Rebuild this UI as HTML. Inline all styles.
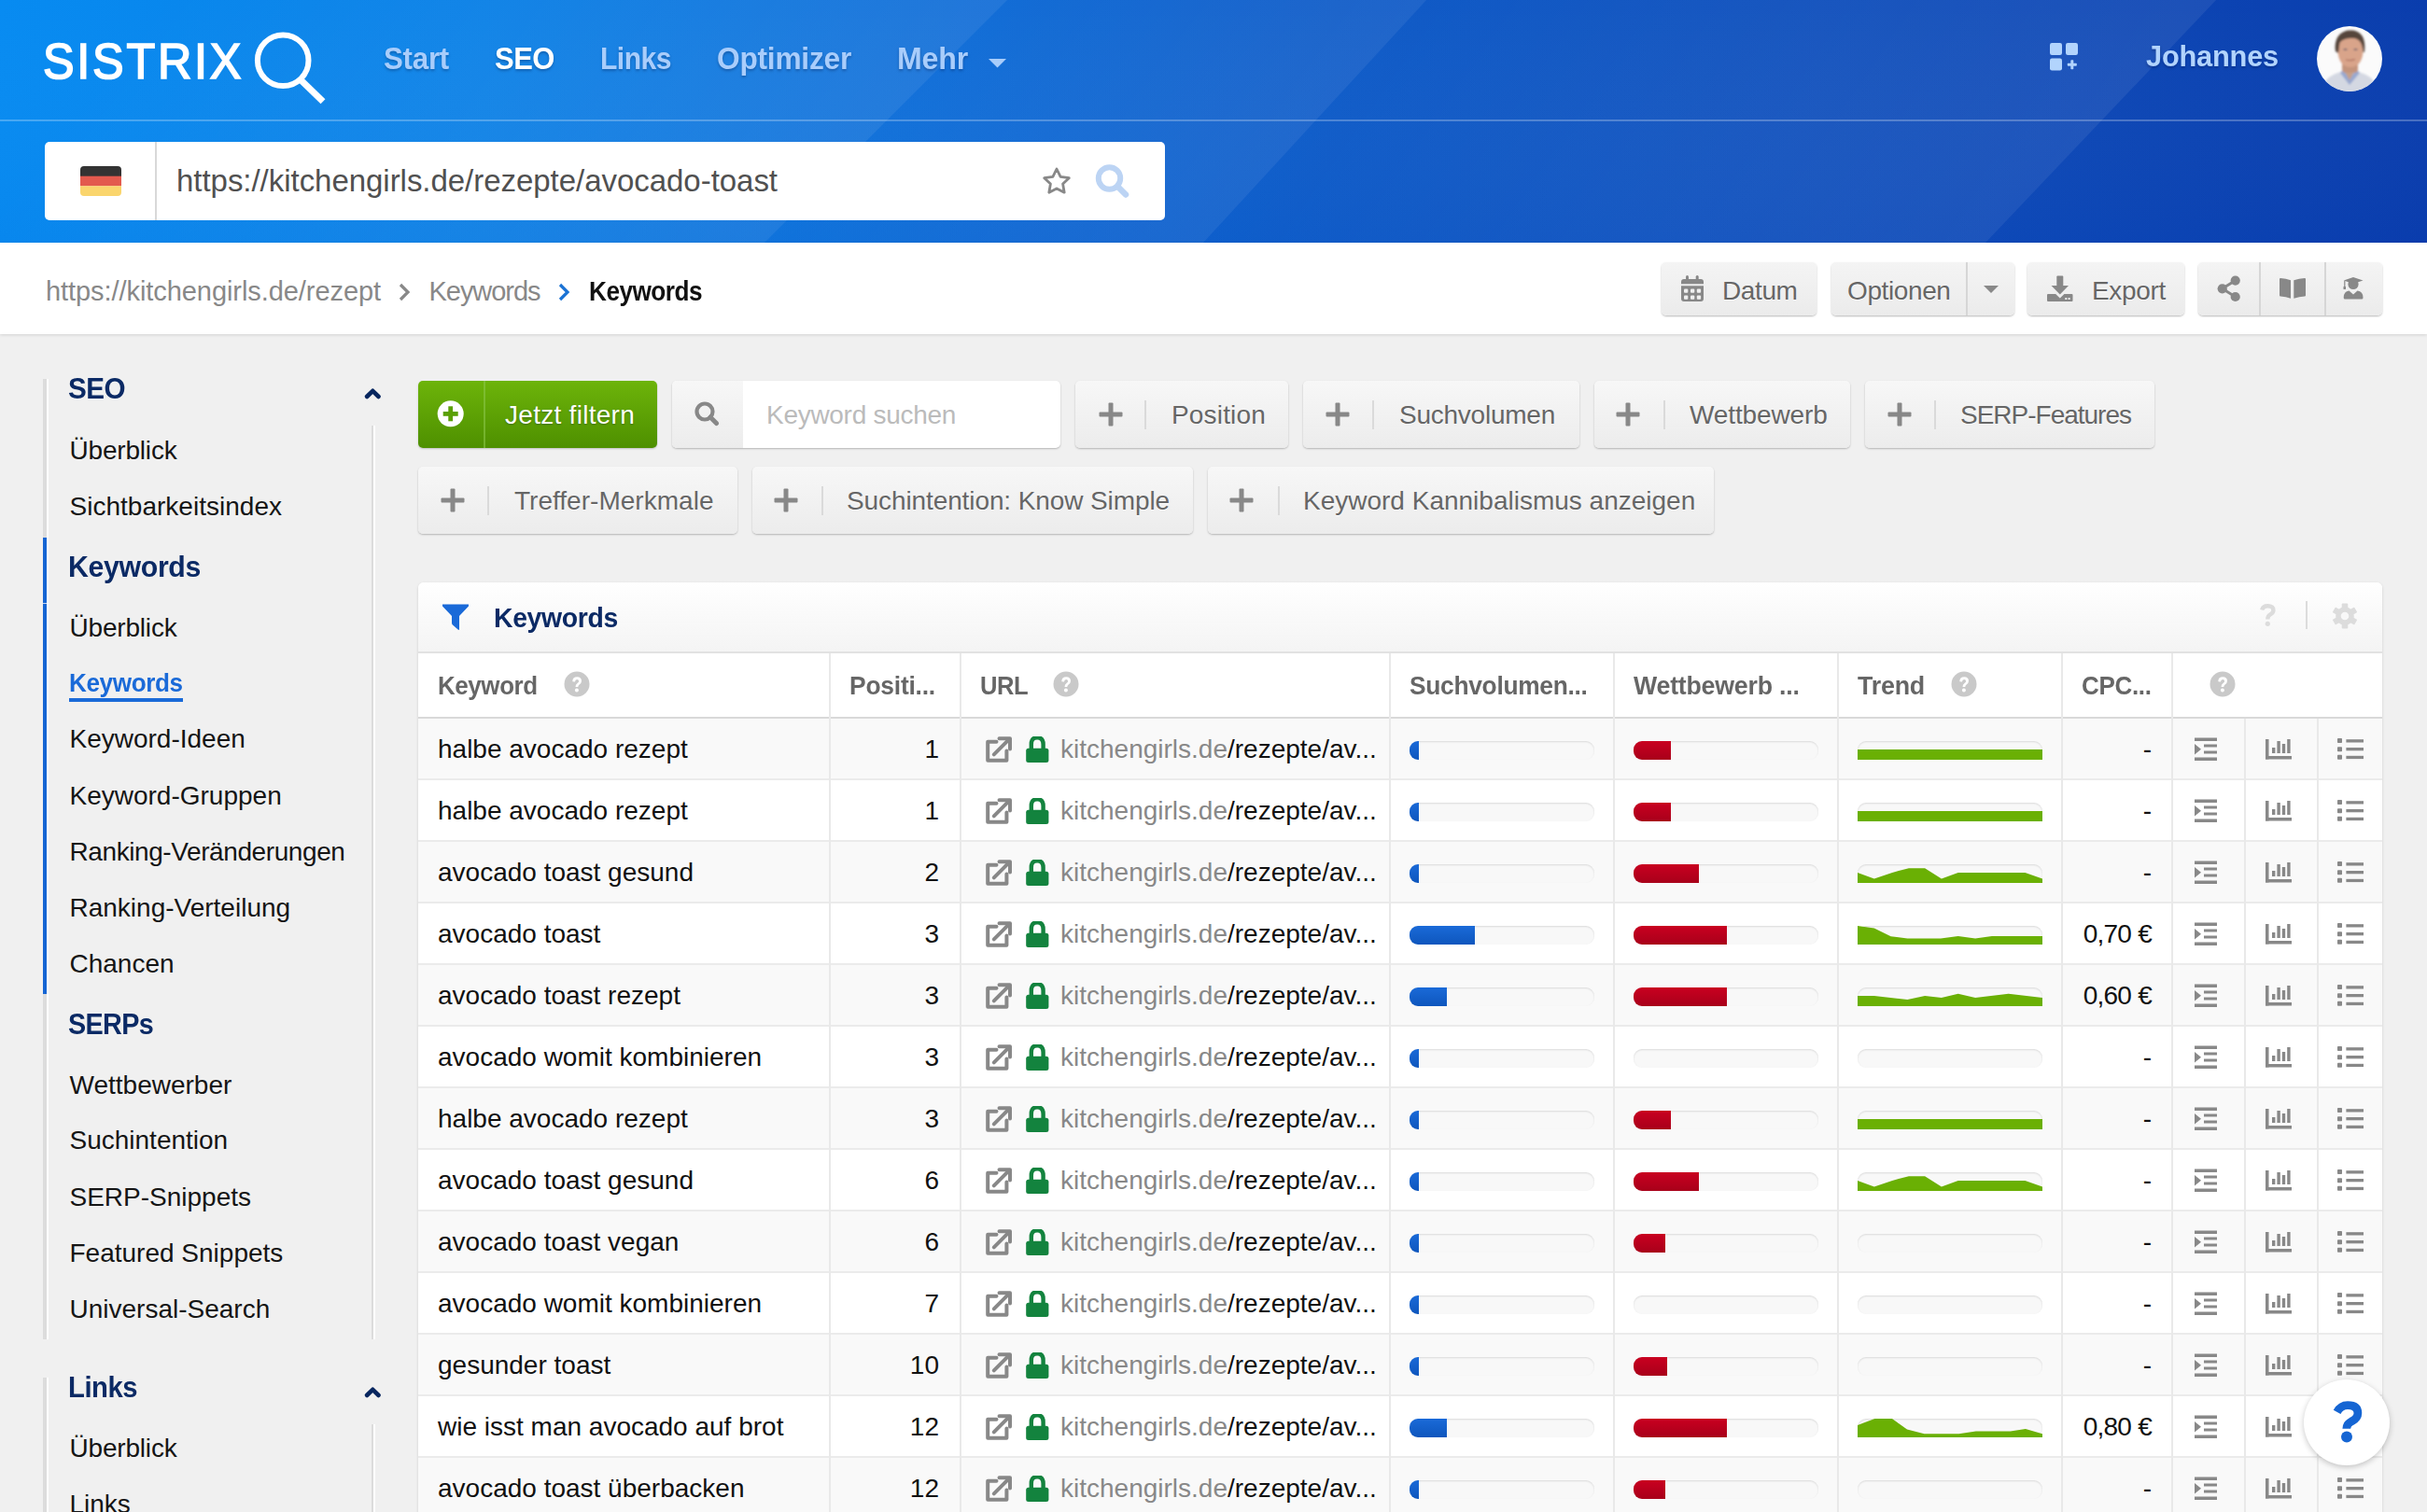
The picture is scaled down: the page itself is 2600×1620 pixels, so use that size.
<!DOCTYPE html><html><head><meta charset="utf-8"><style>
html,body{margin:0;padding:0}
body{width:2600px;height:1620px;overflow:hidden;position:relative;background:#f0f0f0;font-family:"Liberation Sans",sans-serif}
.t{position:absolute;line-height:1.117;white-space:nowrap}
</style></head><body><div style="position:absolute;left:0;top:0;width:2600px;height:260px;overflow:hidden;
background:linear-gradient(90deg,#078bf1 0%,#0a80e6 20%,#0c6ad6 40%,#0e5bc8 55%,#0f4fbc 75%,#0a3dad 100%)">
<svg width="2600" height="260" style="position:absolute;left:0;top:0">
<defs>
<linearGradient id="g1" gradientUnits="userSpaceOnUse" x1="400" y1="-300" x2="949" y2="130"><stop offset="0" stop-color="#fff" stop-opacity="0"/><stop offset="1" stop-color="#fff" stop-opacity="0.09"/></linearGradient>
<linearGradient id="g2" gradientUnits="userSpaceOnUse" x1="1000" y1="-200" x2="1408" y2="130"><stop offset="0" stop-color="#fff" stop-opacity="0"/><stop offset="1" stop-color="#fff" stop-opacity="0.07"/></linearGradient>
<linearGradient id="g3" gradientUnits="userSpaceOnUse" x1="1650" y1="-300" x2="2250" y2="130"><stop offset="0" stop-color="#fff" stop-opacity="0"/><stop offset="1" stop-color="#fff" stop-opacity="0.07"/></linearGradient>
<linearGradient id="gv" x1="0" y1="0" x2="0" y2="1"><stop offset="0" stop-color="#fff" stop-opacity="0"/><stop offset="1" stop-color="#0030b0" stop-opacity="0.05"/></linearGradient>
</defs>
<polygon points="0,0 1079,0 819,260 0,260" fill="url(#g1)"/>
<polygon points="1079,0 1528,0 1289,260 819,260" fill="url(#g2)"/>
<polygon points="1528,0 2374,0 2127,260 1289,260" fill="url(#g3)"/>
<rect x="0" y="0" width="2600" height="260" fill="url(#gv)"/>
<rect x="0" y="128" width="2600" height="2" fill="#fff" fill-opacity="0.25"/>
</svg>
</div><svg style="position:absolute;left:260px;top:25px" width="100" height="95" viewBox="260 25 100 95">
<circle cx="303.2" cy="64.7" r="27.3" fill="none" stroke="#fff" stroke-width="6"/>
<line x1="321" y1="84.5" x2="346" y2="108.8" stroke="#fff" stroke-width="7"/>
</svg><svg style="position:absolute;left:1057px;top:61px" width="24" height="14"><polygon points="2,2 21,2 11.5,11.5" fill="#a9cdfb"/></svg><svg style="position:absolute;left:2194px;top:44px" width="34" height="34" viewBox="0 0 34 34">
<rect x="2" y="2" width="13" height="13" rx="2.2" fill="#b2d4fd"/>
<rect x="19" y="2" width="13" height="13" rx="2.2" fill="#b2d4fd"/>
<rect x="2" y="18.5" width="13" height="13" rx="2.2" fill="#b2d4fd"/>
<rect x="24.3" y="20.2" width="3" height="10" rx="0.8" fill="#b2d4fd"/>
<rect x="20.8" y="23.7" width="10" height="3" rx="0.8" fill="#b2d4fd"/>
</svg><svg style="position:absolute;left:2482px;top:28px" width="70" height="70" viewBox="0 0 70 70">
<defs><clipPath id="av"><circle cx="35" cy="35" r="35"/></clipPath><filter id="avb"><feGaussianBlur stdDeviation="0.9"/></filter></defs>
<g clip-path="url(#av)">
<rect width="70" height="70" fill="#fbfbfb"/>
<g filter="url(#avb)">
<path d="M4 72 C6 58 14 52 26 49 L44 49 C56 52 64 58 66 72 Z" fill="#d4d8e2"/>
<path d="M25 50 L35 63 L46 50 L43 47 L35 55 L28 47 Z" fill="#98a8d0"/>
<path d="M30 49 L35 58 L40 49 Z" fill="#c8a088"/>
<rect x="27" y="38" width="17" height="12" rx="4" fill="#c4947c"/>
<path d="M22.5 26 C22.5 15 28 11.5 36 11.5 C44 11.5 49.5 15 49.5 26 C49.5 37 44 44 36 44 C28 44 22.5 37 22.5 26 Z" fill="#d9a48a"/>
<path d="M20 27 C18 12 26 4.5 36 4.5 C47 4.5 53 12 51 28 L49.5 28 C49 19 46 14 40 13 C34 12.5 27 13.5 24.5 18 L23 29 Z" fill="#54443a"/>
<ellipse cx="30.5" cy="25" rx="2.2" ry="1.1" fill="#7a6a70"/><ellipse cx="41.5" cy="25" rx="2.2" ry="1.1" fill="#7a6a70"/>
<path d="M31 36 Q36 37.5 41 35.5" stroke="#a86a5a" stroke-width="1.3" fill="none"/>
</g></g></svg><div style="position:absolute;left:48px;top:152px;width:1200px;height:84px;background:#fff;border-radius:5px"></div>
<div style="position:absolute;left:166px;top:152px;width:2px;height:84px;background:#d8d8d8"></div>
<svg style="position:absolute;left:86px;top:178px" width="44" height="32" viewBox="0 0 44 32">
<defs><clipPath id="fl"><rect width="44" height="32" rx="4"/></clipPath></defs>
<g clip-path="url(#fl)"><rect width="44" height="11" fill="#333"/><rect y="10.7" width="44" height="10.7" fill="#e35a4e"/><rect y="21.3" width="44" height="10.7" fill="#fad56d"/></g></svg>
<svg style="position:absolute;left:1112px;top:175px" width="40" height="36" viewBox="0 0 40 36">
<polygon points="20,6 24.1,14.3 33.3,15.7 26.6,22.1 28.2,31.2 20,26.9 11.8,31.2 13.4,22.1 6.7,15.7 15.9,14.3" fill="none" stroke="#888" stroke-width="2.8" stroke-linejoin="round"/></svg>
<svg style="position:absolute;left:1170px;top:172px" width="45" height="45" viewBox="1170 172 45 45">
<circle cx="1188.5" cy="191" r="11.7" fill="none" stroke="#bcd4f4" stroke-width="6"/>
<line x1="1198" y1="200.5" x2="1206" y2="208.5" stroke="#bcd4f4" stroke-width="6.5" stroke-linecap="round"/></svg><div style="position:absolute;left:0;top:260px;width:2600px;height:98px;background:#fff;box-shadow:0 1px 3px rgba(0,0,0,0.12)"></div><svg style="position:absolute;left:424px;top:301px" width="20" height="24"><polyline points="5,4 13,12 5,20" fill="none" stroke="#888" stroke-width="3.2"/></svg><svg style="position:absolute;left:595px;top:301px" width="20" height="24"><polyline points="5,4 13,12 5,20" fill="none" stroke="#1a72d4" stroke-width="3.2"/></svg><div style="position:absolute;top:281px;height:57px;border-radius:5px;background:linear-gradient(#f4f4f4,#ebebeb);box-shadow:0 1px 2px rgba(0,0,0,0.28);left:1780px;width:166px"></div><div style="position:absolute;top:281px;height:57px;border-radius:5px;background:linear-gradient(#f4f4f4,#ebebeb);box-shadow:0 1px 2px rgba(0,0,0,0.28);left:1962px;width:196px"></div><div style="position:absolute;left:2106px;top:281px;width:2px;height:57px;background:#d6d6d6"></div><div style="position:absolute;top:281px;height:57px;border-radius:5px;background:linear-gradient(#f4f4f4,#ebebeb);box-shadow:0 1px 2px rgba(0,0,0,0.28);left:2172px;width:168px"></div><div style="position:absolute;top:281px;height:57px;border-radius:5px;background:linear-gradient(#f4f4f4,#ebebeb);box-shadow:0 1px 2px rgba(0,0,0,0.28);left:2355px;width:197px"></div><div style="position:absolute;left:2420px;top:281px;width:2px;height:57px;background:#d6d6d6"></div><div style="position:absolute;left:2490px;top:281px;width:2px;height:57px;background:#d6d6d6"></div><svg style="position:absolute;left:1800px;top:294px" width="26" height="30" viewBox="0 0 26 30">
<rect x="6" y="1" width="3" height="6" rx="1.5" fill="#888"/><rect x="16.7" y="1" width="3" height="6" rx="1.5" fill="#888"/>
<path d="M1 8 Q1 5 4 5 L22 5 Q25 5 25 8 L25 10.2 L1 10.2 Z" fill="#888"/>
<path d="M1 12.2 L25 12.2 L25 26 Q25 29 22 29 L4 29 Q1 29 1 26 Z" fill="#888"/>
<g fill="#f0f0f0"><rect x="4" y="15.5" width="4.3" height="4.3" rx="1"/><rect x="11" y="15.5" width="4.3" height="4.3" rx="1"/><rect x="17.8" y="15.5" width="4.3" height="4.3" rx="1"/>
<rect x="4" y="22.5" width="4.3" height="4.3" rx="1"/><rect x="11" y="22.5" width="4.3" height="4.3" rx="1"/><rect x="17.8" y="22.5" width="4.3" height="4.3" rx="1"/></g></svg><svg style="position:absolute;left:2117px;top:302px" width="32" height="16"><polygon points="8,4 24,4 16,12" fill="#888"/></svg><svg style="position:absolute;left:2192px;top:294px" width="30" height="30" viewBox="0 0 30 30">
<rect x="11.3" y="1.5" width="7" height="11" rx="1" fill="#888"/>
<polygon points="5.5,12 24,12 14.8,21.5" fill="#888"/>
<path d="M1 22 Q1 21 2 21 L10.2 21 L14.8 25.5 L19.4 21 L27.5 21 Q28.5 21 28.5 22 L28.5 28 Q28.5 29 27.5 29 L2 29 Q1 29 1 28 Z" fill="#888"/>
<rect x="20.3" y="25" width="2" height="2" fill="#eee"/><rect x="23.6" y="25" width="2" height="2" fill="#eee"/></svg><svg style="position:absolute;left:2372px;top:292px" width="32" height="34" viewBox="0 0 32 34">
<line x1="22.7" y1="8.6" x2="8.7" y2="17.3" stroke="#888" stroke-width="3"/><line x1="8.7" y1="17.3" x2="22.7" y2="26" stroke="#888" stroke-width="3"/>
<circle cx="22.7" cy="8.6" r="5.1" fill="#888"/><circle cx="8.7" cy="17.3" r="5.1" fill="#888"/><circle cx="22.7" cy="26" r="5.1" fill="#888"/></svg>
<svg style="position:absolute;left:2440px;top:296px" width="32" height="26" viewBox="0 0 32 26">
<path d="M2 3 Q2 2 3 2 Q9 2.5 14 4.2 L14 23.8 Q9 22 3 21.5 Q2 21.5 2 20.5 Z" fill="#888"/>
<path d="M30 3 Q30 2 29 2 Q23 2.5 17.3 4.2 L17.3 23.8 Q23 22 29 21.5 Q30 21.5 30 20.5 Z" fill="#888"/></svg>
<svg style="position:absolute;left:2508px;top:295px" width="28" height="28" viewBox="0 0 28 28">
<polygon points="2.7,5.5 13,2 23.5,5.5 13,9" fill="#888"/>
<circle cx="13" cy="9.5" r="5.6" fill="#888"/>
<rect x="3.2" y="6" width="1.2" height="8" fill="#888"/><rect x="2.5" y="12" width="2.5" height="3" fill="#888"/>
<path d="M2.7 24 Q2.7 17 8.5 16.5 L13 20.5 L17.5 16.5 Q23.5 17 23.5 24 Q23.5 25.5 22 25.5 L4.2 25.5 Q2.7 25.5 2.7 24 Z" fill="#888"/></svg><div style="position:absolute;left:50px;top:406px;width:2px;height:1029px;background:#fff"></div><div style="position:absolute;left:50px;top:1476px;width:2px;height:150px;background:#fff"></div><div style="position:absolute;left:400px;top:456px;width:2px;height:979px;background:#fff"></div><div style="position:absolute;left:400px;top:1526px;width:2px;height:100px;background:#fff"></div><div style="position:absolute;left:46px;top:406px;width:4px;height:1029px;background:#dcdcdc"></div><div style="position:absolute;left:46px;top:576px;width:4px;height:489px;background:#1565d3"></div><div style="position:absolute;left:46px;top:645.5px;width:4px;height:1px;background:#c8d8f0"></div><div style="position:absolute;left:398px;top:456px;width:2px;height:979px;background:#dcdcdc"></div><div style="position:absolute;left:46px;top:1476px;width:4px;height:150px;background:#dcdcdc"></div><div style="position:absolute;left:398px;top:1526px;width:2px;height:100px;background:#dcdcdc"></div><svg style="position:absolute;left:388px;top:413px" width="22" height="16"><polyline points="5,12 11.3,5.8 17.6,12" fill="none" stroke="#07265f" stroke-width="4.6" stroke-linecap="round" stroke-linejoin="round"/></svg><svg style="position:absolute;left:388px;top:1483px" width="22" height="16"><polyline points="5,12 11.3,5.8 17.6,12" fill="none" stroke="#07265f" stroke-width="4.6" stroke-linecap="round" stroke-linejoin="round"/></svg><div style="position:absolute;left:74px;top:748px;width:122px;height:3.5px;background:#1a6ad8"></div><div style="position:absolute;left:448px;top:408px;width:256px;height:72px;border-radius:5px;background:linear-gradient(#6db40a,#4e9000);box-shadow:0 1px 2px rgba(0,0,0,0.2)"></div><div style="position:absolute;left:518px;top:408px;width:2px;height:72px;background:#8bc64a;opacity:0.6"></div><svg style="position:absolute;left:467px;top:428px" width="32" height="32" viewBox="0 0 32 32">
<circle cx="15.7" cy="15.3" r="14" fill="#fff"/><rect x="7.7" y="13" width="16" height="4.8" fill="#5aa005"/><rect x="13.3" y="7.3" width="4.8" height="16" fill="#5aa005"/></svg><div style="position:absolute;height:72px;border-radius:5px;background:linear-gradient(#f7f7f7,#ececec);box-shadow:0 1px 2px rgba(0,0,0,0.25);left:720px;top:408px;width:416px;background:#fff"></div><div style="position:absolute;left:720px;top:408px;width:76px;height:72px;border-radius:5px 0 0 5px;background:linear-gradient(#f7f7f7,#ececec)"></div><svg style="position:absolute;left:740px;top:426px" width="36" height="36" viewBox="0 0 36 36">
<circle cx="15" cy="15" r="8.5" fill="none" stroke="#888" stroke-width="4.2"/><line x1="21" y1="21" x2="27.5" y2="27.5" stroke="#888" stroke-width="5" stroke-linecap="round"/></svg><div style="position:absolute;height:72px;border-radius:5px;background:linear-gradient(#f7f7f7,#ececec);box-shadow:0 1px 2px rgba(0,0,0,0.25);left:1152px;top:408px;width:228px"></div><svg style="position:absolute;left:1176.5px;top:431px" width="26" height="26"><rect x="0.5" y="10.5" width="25" height="5" rx="1" fill="#888"/><rect x="10.5" y="0.5" width="5" height="25" rx="1" fill="#888"/></svg><div style="position:absolute;left:1226px;top:429px;width:2px;height:31px;background:#dadada"></div><div style="position:absolute;height:72px;border-radius:5px;background:linear-gradient(#f7f7f7,#ececec);box-shadow:0 1px 2px rgba(0,0,0,0.25);left:1396px;top:408px;width:296px"></div><svg style="position:absolute;left:1420px;top:431px" width="26" height="26"><rect x="0.5" y="10.5" width="25" height="5" rx="1" fill="#888"/><rect x="10.5" y="0.5" width="5" height="25" rx="1" fill="#888"/></svg><div style="position:absolute;left:1470px;top:429px;width:2px;height:31px;background:#dadada"></div><div style="position:absolute;height:72px;border-radius:5px;background:linear-gradient(#f7f7f7,#ececec);box-shadow:0 1px 2px rgba(0,0,0,0.25);left:1708px;top:408px;width:274px"></div><svg style="position:absolute;left:1731px;top:431px" width="26" height="26"><rect x="0.5" y="10.5" width="25" height="5" rx="1" fill="#888"/><rect x="10.5" y="0.5" width="5" height="25" rx="1" fill="#888"/></svg><div style="position:absolute;left:1782px;top:429px;width:2px;height:31px;background:#dadada"></div><div style="position:absolute;height:72px;border-radius:5px;background:linear-gradient(#f7f7f7,#ececec);box-shadow:0 1px 2px rgba(0,0,0,0.25);left:1998px;top:408px;width:310px"></div><svg style="position:absolute;left:2022px;top:431px" width="26" height="26"><rect x="0.5" y="10.5" width="25" height="5" rx="1" fill="#888"/><rect x="10.5" y="0.5" width="5" height="25" rx="1" fill="#888"/></svg><div style="position:absolute;left:2072px;top:429px;width:2px;height:31px;background:#dadada"></div><div style="position:absolute;height:72px;border-radius:5px;background:linear-gradient(#f7f7f7,#ececec);box-shadow:0 1px 2px rgba(0,0,0,0.25);left:448px;top:500px;width:342px"></div><svg style="position:absolute;left:471.7px;top:523px" width="26" height="26"><rect x="0.5" y="10.5" width="25" height="5" rx="1" fill="#888"/><rect x="10.5" y="0.5" width="5" height="25" rx="1" fill="#888"/></svg><div style="position:absolute;left:522px;top:521px;width:2px;height:31px;background:#dadada"></div><div style="position:absolute;height:72px;border-radius:5px;background:linear-gradient(#f7f7f7,#ececec);box-shadow:0 1px 2px rgba(0,0,0,0.25);left:806px;top:500px;width:472px"></div><svg style="position:absolute;left:829.4px;top:523px" width="26" height="26"><rect x="0.5" y="10.5" width="25" height="5" rx="1" fill="#888"/><rect x="10.5" y="0.5" width="5" height="25" rx="1" fill="#888"/></svg><div style="position:absolute;left:880px;top:521px;width:2px;height:31px;background:#dadada"></div><div style="position:absolute;height:72px;border-radius:5px;background:linear-gradient(#f7f7f7,#ececec);box-shadow:0 1px 2px rgba(0,0,0,0.25);left:1294px;top:500px;width:542px"></div><svg style="position:absolute;left:1317px;top:523px" width="26" height="26"><rect x="0.5" y="10.5" width="25" height="5" rx="1" fill="#888"/><rect x="10.5" y="0.5" width="5" height="25" rx="1" fill="#888"/></svg><div style="position:absolute;left:1368.5px;top:521px;width:2px;height:31px;background:#dadada"></div><div style="position:absolute;left:448px;top:624px;width:2104px;height:1010px;background:#fff;border-radius:6px 6px 0 0;box-shadow:0 1px 3px rgba(0,0,0,0.15)"></div><div style="position:absolute;left:448px;top:624px;width:2104px;height:74px;border-radius:6px 6px 0 0;background:linear-gradient(#ffffff,#f4f4f4)"></div><div style="position:absolute;left:448px;top:698px;width:2104px;height:2px;background:#e2e2e2"></div><svg style="position:absolute;left:472px;top:645px" width="32" height="32" viewBox="0 0 32 32">
<path d="M2 2.5 L30 2.5 L30 4.5 L20 15 L20 29 Q20 30.5 18.6 29.6 L13.5 25 Q12 24 12 22.5 L12 15 L2 4.5 Z" fill="#1a6ad8"/></svg><svg style="position:absolute;left:2416px;top:642px" width="28" height="34" viewBox="0 0 28 34">
<path d="M7.2 11.5 Q8.3 7.3 13.3 7.3 Q19.4 7.3 19.4 11.9 Q19.4 14.6 16.1 16.4 Q13.3 17.9 13.3 21.4" fill="none" stroke="#dcdcdc" stroke-width="4.4"/>
<circle cx="13.3" cy="26.3" r="2.6" fill="#dcdcdc"/></svg>
<div style="position:absolute;left:2470px;top:644px;width:2px;height:30px;background:#dcdcdc"></div>
<svg style="position:absolute;left:2497px;top:644.5px" width="30" height="30" viewBox="-15 -15 30 30">
<g fill="#dcdcdc">
<circle r="9.8"/>
<rect x="-3.3" y="-13.5" width="6.6" height="6" rx="1"/>
<rect x="-3.3" y="-13.5" width="6.6" height="6" rx="1" transform="rotate(60)"/>
<rect x="-3.3" y="-13.5" width="6.6" height="6" rx="1" transform="rotate(120)"/>
<rect x="-3.3" y="-13.5" width="6.6" height="6" rx="1" transform="rotate(180)"/>
<rect x="-3.3" y="-13.5" width="6.6" height="6" rx="1" transform="rotate(240)"/>
<rect x="-3.3" y="-13.5" width="6.6" height="6" rx="1" transform="rotate(300)"/>
</g><circle r="4.3" fill="#f8f8f8"/></svg><div style="position:absolute;left:448px;top:768px;width:2104px;height:2px;background:#d9d9d9"></div><div style="position:absolute;left:448px;top:770px;width:2104px;height:10px;background:linear-gradient(rgba(0,0,0,0.05),rgba(0,0,0,0))"></div><svg style="position:absolute;left:603.5px;top:719.4px" width="28" height="28" viewBox="0 0 28 28">
<circle cx="14" cy="14" r="13.5" fill="#c9c9c9"/>
<path d="M9.3 11.2 Q9.3 6.3 14.2 6.3 Q19 6.3 19 10.8 Q19 13.2 16.4 14.8 Q15.3 15.5 15.3 17 L12.5 17 Q12.5 14.3 14.5 13 Q16.1 12 16.1 10.9 Q16.1 9.1 14.1 9.1 Q12.1 9.1 12 11.6 Z" fill="#fff"/>
<circle cx="13.9" cy="20.6" r="2" fill="#fff"/></svg><svg style="position:absolute;left:1128px;top:719.4px" width="28" height="28" viewBox="0 0 28 28">
<circle cx="14" cy="14" r="13.5" fill="#c9c9c9"/>
<path d="M9.3 11.2 Q9.3 6.3 14.2 6.3 Q19 6.3 19 10.8 Q19 13.2 16.4 14.8 Q15.3 15.5 15.3 17 L12.5 17 Q12.5 14.3 14.5 13 Q16.1 12 16.1 10.9 Q16.1 9.1 14.1 9.1 Q12.1 9.1 12 11.6 Z" fill="#fff"/>
<circle cx="13.9" cy="20.6" r="2" fill="#fff"/></svg><svg style="position:absolute;left:2090px;top:719.4px" width="28" height="28" viewBox="0 0 28 28">
<circle cx="14" cy="14" r="13.5" fill="#c9c9c9"/>
<path d="M9.3 11.2 Q9.3 6.3 14.2 6.3 Q19 6.3 19 10.8 Q19 13.2 16.4 14.8 Q15.3 15.5 15.3 17 L12.5 17 Q12.5 14.3 14.5 13 Q16.1 12 16.1 10.9 Q16.1 9.1 14.1 9.1 Q12.1 9.1 12 11.6 Z" fill="#fff"/>
<circle cx="13.9" cy="20.6" r="2" fill="#fff"/></svg><svg style="position:absolute;left:2367px;top:719.4px" width="28" height="28" viewBox="0 0 28 28">
<circle cx="14" cy="14" r="13.5" fill="#c9c9c9"/>
<path d="M9.3 11.2 Q9.3 6.3 14.2 6.3 Q19 6.3 19 10.8 Q19 13.2 16.4 14.8 Q15.3 15.5 15.3 17 L12.5 17 Q12.5 14.3 14.5 13 Q16.1 12 16.1 10.9 Q16.1 9.1 14.1 9.1 Q12.1 9.1 12 11.6 Z" fill="#fff"/>
<circle cx="13.9" cy="20.6" r="2" fill="#fff"/></svg><div style="position:absolute;left:448px;top:770px;width:2104px;height:66px;background:#f9f9f9"></div><div style="position:absolute;left:448px;top:834px;width:2104px;height:2px;background:#ebebeb"></div><svg style="position:absolute;left:1056px;top:789px" width="28" height="28" viewBox="0 0 28 28">
<polyline points="11.5,5.8 2.2,5.8 2.2,25.8 22.4,25.8 22.4,15.5" fill="none" stroke="#888" stroke-width="4" stroke-linejoin="round" stroke-linecap="round"/>
<line x1="8.8" y1="19.3" x2="24.5" y2="3.6" stroke="#888" stroke-width="4" stroke-linecap="round"/>
<polyline points="14.5,2.3 26,2.3 26,13.5" fill="none" stroke="#888" stroke-width="4" stroke-linejoin="round" stroke-linecap="round"/></svg><svg style="position:absolute;left:1099px;top:789px" width="25" height="29" viewBox="0 0 25 29">
<path d="M5.8 13 L5.8 8.5 Q5.8 1.3 12.2 1.3 Q18.6 1.3 18.6 8.5 L18.6 13" fill="none" stroke="#13833e" stroke-width="4.4"/>
<rect x="0.2" y="12.8" width="24.2" height="15.3" rx="2.5" fill="#13833e"/></svg><div style="position:absolute;width:198px;height:20px;border-radius:9px;background:#f8f8f8;box-shadow:inset 0 1px 2px rgba(0,0,0,0.12);left:1510px;top:794px"></div><div style="position:absolute;left:1510px;top:794px;width:10px;height:20px;border-radius:9px 0 0 9px;background:linear-gradient(#1a6ad8,#0e56bd)"></div><div style="position:absolute;width:198px;height:20px;border-radius:9px;background:#f8f8f8;box-shadow:inset 0 1px 2px rgba(0,0,0,0.12);left:1750px;top:794px"></div><div style="position:absolute;left:1750px;top:794px;width:40px;height:20px;border-radius:9px 0 0 9px;background:linear-gradient(#c90020,#a8001a)"></div><div style="position:absolute;width:198px;height:20px;border-radius:9px;background:#f8f8f8;box-shadow:inset 0 1px 2px rgba(0,0,0,0.12);left:1990px;top:794px"></div><svg style="position:absolute;left:1990px;top:794px" width="198" height="20"><polygon points="0.0,9.0 198.0,9.0 198,20 0,20" fill="#6ab004"/></svg><svg style="position:absolute;left:2349px;top:789px" width="28" height="28" viewBox="0 0 28 28">
<g fill="#888"><rect x="2" y="1.5" width="24" height="3.5"/><rect x="12" y="8.5" width="14" height="3"/><rect x="12" y="15.5" width="14" height="3"/><rect x="2" y="22.5" width="24" height="3.5"/>
<polygon points="2,8 9,13.8 2,19.5"/></g></svg><svg style="position:absolute;left:2427px;top:789px" width="30" height="28" viewBox="0 0 30 28">
<g fill="#888"><rect x="0" y="3" width="3.5" height="21.5"/><rect x="0" y="21" width="28" height="3.5"/>
<rect x="7" y="12" width="3.4" height="6"/><rect x="12.4" y="5" width="3.4" height="13"/><rect x="17.8" y="8" width="3.4" height="10"/><rect x="23.2" y="3" width="3.4" height="15"/></g></svg><svg style="position:absolute;left:2503px;top:789px" width="30" height="28" viewBox="0 0 30 28">
<g fill="#888"><rect x="1" y="2" width="5" height="5" rx="0.8"/><rect x="1" y="11.3" width="5" height="5" rx="0.8"/><rect x="1" y="19.8" width="5" height="5" rx="0.8"/>
<rect x="10.4" y="3.2" width="18.6" height="3.3"/><rect x="10.4" y="12" width="18.6" height="3.3"/><rect x="10.4" y="20.8" width="18.6" height="3.3"/></g></svg><div style="position:absolute;left:448px;top:836px;width:2104px;height:66px;background:#ffffff"></div><div style="position:absolute;left:448px;top:900px;width:2104px;height:2px;background:#ebebeb"></div><svg style="position:absolute;left:1056px;top:855px" width="28" height="28" viewBox="0 0 28 28">
<polyline points="11.5,5.8 2.2,5.8 2.2,25.8 22.4,25.8 22.4,15.5" fill="none" stroke="#888" stroke-width="4" stroke-linejoin="round" stroke-linecap="round"/>
<line x1="8.8" y1="19.3" x2="24.5" y2="3.6" stroke="#888" stroke-width="4" stroke-linecap="round"/>
<polyline points="14.5,2.3 26,2.3 26,13.5" fill="none" stroke="#888" stroke-width="4" stroke-linejoin="round" stroke-linecap="round"/></svg><svg style="position:absolute;left:1099px;top:855px" width="25" height="29" viewBox="0 0 25 29">
<path d="M5.8 13 L5.8 8.5 Q5.8 1.3 12.2 1.3 Q18.6 1.3 18.6 8.5 L18.6 13" fill="none" stroke="#13833e" stroke-width="4.4"/>
<rect x="0.2" y="12.8" width="24.2" height="15.3" rx="2.5" fill="#13833e"/></svg><div style="position:absolute;width:198px;height:20px;border-radius:9px;background:#f8f8f8;box-shadow:inset 0 1px 2px rgba(0,0,0,0.12);left:1510px;top:860px"></div><div style="position:absolute;left:1510px;top:860px;width:10px;height:20px;border-radius:9px 0 0 9px;background:linear-gradient(#1a6ad8,#0e56bd)"></div><div style="position:absolute;width:198px;height:20px;border-radius:9px;background:#f8f8f8;box-shadow:inset 0 1px 2px rgba(0,0,0,0.12);left:1750px;top:860px"></div><div style="position:absolute;left:1750px;top:860px;width:40px;height:20px;border-radius:9px 0 0 9px;background:linear-gradient(#c90020,#a8001a)"></div><div style="position:absolute;width:198px;height:20px;border-radius:9px;background:#f8f8f8;box-shadow:inset 0 1px 2px rgba(0,0,0,0.12);left:1990px;top:860px"></div><svg style="position:absolute;left:1990px;top:860px" width="198" height="20"><polygon points="0.0,9.0 198.0,9.0 198,20 0,20" fill="#6ab004"/></svg><svg style="position:absolute;left:2349px;top:855px" width="28" height="28" viewBox="0 0 28 28">
<g fill="#888"><rect x="2" y="1.5" width="24" height="3.5"/><rect x="12" y="8.5" width="14" height="3"/><rect x="12" y="15.5" width="14" height="3"/><rect x="2" y="22.5" width="24" height="3.5"/>
<polygon points="2,8 9,13.8 2,19.5"/></g></svg><svg style="position:absolute;left:2427px;top:855px" width="30" height="28" viewBox="0 0 30 28">
<g fill="#888"><rect x="0" y="3" width="3.5" height="21.5"/><rect x="0" y="21" width="28" height="3.5"/>
<rect x="7" y="12" width="3.4" height="6"/><rect x="12.4" y="5" width="3.4" height="13"/><rect x="17.8" y="8" width="3.4" height="10"/><rect x="23.2" y="3" width="3.4" height="15"/></g></svg><svg style="position:absolute;left:2503px;top:855px" width="30" height="28" viewBox="0 0 30 28">
<g fill="#888"><rect x="1" y="2" width="5" height="5" rx="0.8"/><rect x="1" y="11.3" width="5" height="5" rx="0.8"/><rect x="1" y="19.8" width="5" height="5" rx="0.8"/>
<rect x="10.4" y="3.2" width="18.6" height="3.3"/><rect x="10.4" y="12" width="18.6" height="3.3"/><rect x="10.4" y="20.8" width="18.6" height="3.3"/></g></svg><div style="position:absolute;left:448px;top:902px;width:2104px;height:66px;background:#f9f9f9"></div><div style="position:absolute;left:448px;top:966px;width:2104px;height:2px;background:#ebebeb"></div><svg style="position:absolute;left:1056px;top:921px" width="28" height="28" viewBox="0 0 28 28">
<polyline points="11.5,5.8 2.2,5.8 2.2,25.8 22.4,25.8 22.4,15.5" fill="none" stroke="#888" stroke-width="4" stroke-linejoin="round" stroke-linecap="round"/>
<line x1="8.8" y1="19.3" x2="24.5" y2="3.6" stroke="#888" stroke-width="4" stroke-linecap="round"/>
<polyline points="14.5,2.3 26,2.3 26,13.5" fill="none" stroke="#888" stroke-width="4" stroke-linejoin="round" stroke-linecap="round"/></svg><svg style="position:absolute;left:1099px;top:921px" width="25" height="29" viewBox="0 0 25 29">
<path d="M5.8 13 L5.8 8.5 Q5.8 1.3 12.2 1.3 Q18.6 1.3 18.6 8.5 L18.6 13" fill="none" stroke="#13833e" stroke-width="4.4"/>
<rect x="0.2" y="12.8" width="24.2" height="15.3" rx="2.5" fill="#13833e"/></svg><div style="position:absolute;width:198px;height:20px;border-radius:9px;background:#f8f8f8;box-shadow:inset 0 1px 2px rgba(0,0,0,0.12);left:1510px;top:926px"></div><div style="position:absolute;left:1510px;top:926px;width:10px;height:20px;border-radius:9px 0 0 9px;background:linear-gradient(#1a6ad8,#0e56bd)"></div><div style="position:absolute;width:198px;height:20px;border-radius:9px;background:#f8f8f8;box-shadow:inset 0 1px 2px rgba(0,0,0,0.12);left:1750px;top:926px"></div><div style="position:absolute;left:1750px;top:926px;width:70px;height:20px;border-radius:9px 0 0 9px;background:linear-gradient(#c90020,#a8001a)"></div><div style="position:absolute;width:198px;height:20px;border-radius:9px;background:#f8f8f8;box-shadow:inset 0 1px 2px rgba(0,0,0,0.12);left:1990px;top:926px"></div><svg style="position:absolute;left:1990px;top:926px" width="198" height="20"><polygon points="0.0,8.9 17.8,15.4 37.1,8.9 54.9,4.2 72.1,4.2 89.9,15.4 107.7,8.9 179.5,8.9 198.0,15.4 198,20 0,20" fill="#6ab004"/></svg><svg style="position:absolute;left:2349px;top:921px" width="28" height="28" viewBox="0 0 28 28">
<g fill="#888"><rect x="2" y="1.5" width="24" height="3.5"/><rect x="12" y="8.5" width="14" height="3"/><rect x="12" y="15.5" width="14" height="3"/><rect x="2" y="22.5" width="24" height="3.5"/>
<polygon points="2,8 9,13.8 2,19.5"/></g></svg><svg style="position:absolute;left:2427px;top:921px" width="30" height="28" viewBox="0 0 30 28">
<g fill="#888"><rect x="0" y="3" width="3.5" height="21.5"/><rect x="0" y="21" width="28" height="3.5"/>
<rect x="7" y="12" width="3.4" height="6"/><rect x="12.4" y="5" width="3.4" height="13"/><rect x="17.8" y="8" width="3.4" height="10"/><rect x="23.2" y="3" width="3.4" height="15"/></g></svg><svg style="position:absolute;left:2503px;top:921px" width="30" height="28" viewBox="0 0 30 28">
<g fill="#888"><rect x="1" y="2" width="5" height="5" rx="0.8"/><rect x="1" y="11.3" width="5" height="5" rx="0.8"/><rect x="1" y="19.8" width="5" height="5" rx="0.8"/>
<rect x="10.4" y="3.2" width="18.6" height="3.3"/><rect x="10.4" y="12" width="18.6" height="3.3"/><rect x="10.4" y="20.8" width="18.6" height="3.3"/></g></svg><div style="position:absolute;left:448px;top:968px;width:2104px;height:66px;background:#ffffff"></div><div style="position:absolute;left:448px;top:1032px;width:2104px;height:2px;background:#ebebeb"></div><svg style="position:absolute;left:1056px;top:987px" width="28" height="28" viewBox="0 0 28 28">
<polyline points="11.5,5.8 2.2,5.8 2.2,25.8 22.4,25.8 22.4,15.5" fill="none" stroke="#888" stroke-width="4" stroke-linejoin="round" stroke-linecap="round"/>
<line x1="8.8" y1="19.3" x2="24.5" y2="3.6" stroke="#888" stroke-width="4" stroke-linecap="round"/>
<polyline points="14.5,2.3 26,2.3 26,13.5" fill="none" stroke="#888" stroke-width="4" stroke-linejoin="round" stroke-linecap="round"/></svg><svg style="position:absolute;left:1099px;top:987px" width="25" height="29" viewBox="0 0 25 29">
<path d="M5.8 13 L5.8 8.5 Q5.8 1.3 12.2 1.3 Q18.6 1.3 18.6 8.5 L18.6 13" fill="none" stroke="#13833e" stroke-width="4.4"/>
<rect x="0.2" y="12.8" width="24.2" height="15.3" rx="2.5" fill="#13833e"/></svg><div style="position:absolute;width:198px;height:20px;border-radius:9px;background:#f8f8f8;box-shadow:inset 0 1px 2px rgba(0,0,0,0.12);left:1510px;top:992px"></div><div style="position:absolute;left:1510px;top:992px;width:70px;height:20px;border-radius:9px 0 0 9px;background:linear-gradient(#1a6ad8,#0e56bd)"></div><div style="position:absolute;width:198px;height:20px;border-radius:9px;background:#f8f8f8;box-shadow:inset 0 1px 2px rgba(0,0,0,0.12);left:1750px;top:992px"></div><div style="position:absolute;left:1750px;top:992px;width:100px;height:20px;border-radius:9px 0 0 9px;background:linear-gradient(#c90020,#a8001a)"></div><div style="position:absolute;width:198px;height:20px;border-radius:9px;background:#f8f8f8;box-shadow:inset 0 1px 2px rgba(0,0,0,0.12);left:1990px;top:992px"></div><svg style="position:absolute;left:1990px;top:992px" width="198" height="20"><polygon points="0.0,0.0 17.8,2.4 35.6,11.3 53.4,13.4 89.0,13.4 107.7,11.0 126.1,13.4 143.9,11.0 198.0,11.0 198,20 0,20" fill="#6ab004"/></svg><svg style="position:absolute;left:2349px;top:987px" width="28" height="28" viewBox="0 0 28 28">
<g fill="#888"><rect x="2" y="1.5" width="24" height="3.5"/><rect x="12" y="8.5" width="14" height="3"/><rect x="12" y="15.5" width="14" height="3"/><rect x="2" y="22.5" width="24" height="3.5"/>
<polygon points="2,8 9,13.8 2,19.5"/></g></svg><svg style="position:absolute;left:2427px;top:987px" width="30" height="28" viewBox="0 0 30 28">
<g fill="#888"><rect x="0" y="3" width="3.5" height="21.5"/><rect x="0" y="21" width="28" height="3.5"/>
<rect x="7" y="12" width="3.4" height="6"/><rect x="12.4" y="5" width="3.4" height="13"/><rect x="17.8" y="8" width="3.4" height="10"/><rect x="23.2" y="3" width="3.4" height="15"/></g></svg><svg style="position:absolute;left:2503px;top:987px" width="30" height="28" viewBox="0 0 30 28">
<g fill="#888"><rect x="1" y="2" width="5" height="5" rx="0.8"/><rect x="1" y="11.3" width="5" height="5" rx="0.8"/><rect x="1" y="19.8" width="5" height="5" rx="0.8"/>
<rect x="10.4" y="3.2" width="18.6" height="3.3"/><rect x="10.4" y="12" width="18.6" height="3.3"/><rect x="10.4" y="20.8" width="18.6" height="3.3"/></g></svg><div style="position:absolute;left:448px;top:1034px;width:2104px;height:66px;background:#f9f9f9"></div><div style="position:absolute;left:448px;top:1098px;width:2104px;height:2px;background:#ebebeb"></div><svg style="position:absolute;left:1056px;top:1053px" width="28" height="28" viewBox="0 0 28 28">
<polyline points="11.5,5.8 2.2,5.8 2.2,25.8 22.4,25.8 22.4,15.5" fill="none" stroke="#888" stroke-width="4" stroke-linejoin="round" stroke-linecap="round"/>
<line x1="8.8" y1="19.3" x2="24.5" y2="3.6" stroke="#888" stroke-width="4" stroke-linecap="round"/>
<polyline points="14.5,2.3 26,2.3 26,13.5" fill="none" stroke="#888" stroke-width="4" stroke-linejoin="round" stroke-linecap="round"/></svg><svg style="position:absolute;left:1099px;top:1053px" width="25" height="29" viewBox="0 0 25 29">
<path d="M5.8 13 L5.8 8.5 Q5.8 1.3 12.2 1.3 Q18.6 1.3 18.6 8.5 L18.6 13" fill="none" stroke="#13833e" stroke-width="4.4"/>
<rect x="0.2" y="12.8" width="24.2" height="15.3" rx="2.5" fill="#13833e"/></svg><div style="position:absolute;width:198px;height:20px;border-radius:9px;background:#f8f8f8;box-shadow:inset 0 1px 2px rgba(0,0,0,0.12);left:1510px;top:1058px"></div><div style="position:absolute;left:1510px;top:1058px;width:40px;height:20px;border-radius:9px 0 0 9px;background:linear-gradient(#1a6ad8,#0e56bd)"></div><div style="position:absolute;width:198px;height:20px;border-radius:9px;background:#f8f8f8;box-shadow:inset 0 1px 2px rgba(0,0,0,0.12);left:1750px;top:1058px"></div><div style="position:absolute;left:1750px;top:1058px;width:100px;height:20px;border-radius:9px 0 0 9px;background:linear-gradient(#c90020,#a8001a)"></div><div style="position:absolute;width:198px;height:20px;border-radius:9px;background:#f8f8f8;box-shadow:inset 0 1px 2px rgba(0,0,0,0.12);left:1990px;top:1058px"></div><svg style="position:absolute;left:1990px;top:1058px" width="198" height="20"><polygon points="0.0,8.9 17.8,8.9 53.4,13.1 72.1,8.9 89.9,11.0 107.7,6.8 126.1,11.0 161.7,6.8 198.0,11.0 198,20 0,20" fill="#6ab004"/></svg><svg style="position:absolute;left:2349px;top:1053px" width="28" height="28" viewBox="0 0 28 28">
<g fill="#888"><rect x="2" y="1.5" width="24" height="3.5"/><rect x="12" y="8.5" width="14" height="3"/><rect x="12" y="15.5" width="14" height="3"/><rect x="2" y="22.5" width="24" height="3.5"/>
<polygon points="2,8 9,13.8 2,19.5"/></g></svg><svg style="position:absolute;left:2427px;top:1053px" width="30" height="28" viewBox="0 0 30 28">
<g fill="#888"><rect x="0" y="3" width="3.5" height="21.5"/><rect x="0" y="21" width="28" height="3.5"/>
<rect x="7" y="12" width="3.4" height="6"/><rect x="12.4" y="5" width="3.4" height="13"/><rect x="17.8" y="8" width="3.4" height="10"/><rect x="23.2" y="3" width="3.4" height="15"/></g></svg><svg style="position:absolute;left:2503px;top:1053px" width="30" height="28" viewBox="0 0 30 28">
<g fill="#888"><rect x="1" y="2" width="5" height="5" rx="0.8"/><rect x="1" y="11.3" width="5" height="5" rx="0.8"/><rect x="1" y="19.8" width="5" height="5" rx="0.8"/>
<rect x="10.4" y="3.2" width="18.6" height="3.3"/><rect x="10.4" y="12" width="18.6" height="3.3"/><rect x="10.4" y="20.8" width="18.6" height="3.3"/></g></svg><div style="position:absolute;left:448px;top:1100px;width:2104px;height:66px;background:#ffffff"></div><div style="position:absolute;left:448px;top:1164px;width:2104px;height:2px;background:#ebebeb"></div><svg style="position:absolute;left:1056px;top:1119px" width="28" height="28" viewBox="0 0 28 28">
<polyline points="11.5,5.8 2.2,5.8 2.2,25.8 22.4,25.8 22.4,15.5" fill="none" stroke="#888" stroke-width="4" stroke-linejoin="round" stroke-linecap="round"/>
<line x1="8.8" y1="19.3" x2="24.5" y2="3.6" stroke="#888" stroke-width="4" stroke-linecap="round"/>
<polyline points="14.5,2.3 26,2.3 26,13.5" fill="none" stroke="#888" stroke-width="4" stroke-linejoin="round" stroke-linecap="round"/></svg><svg style="position:absolute;left:1099px;top:1119px" width="25" height="29" viewBox="0 0 25 29">
<path d="M5.8 13 L5.8 8.5 Q5.8 1.3 12.2 1.3 Q18.6 1.3 18.6 8.5 L18.6 13" fill="none" stroke="#13833e" stroke-width="4.4"/>
<rect x="0.2" y="12.8" width="24.2" height="15.3" rx="2.5" fill="#13833e"/></svg><div style="position:absolute;width:198px;height:20px;border-radius:9px;background:#f8f8f8;box-shadow:inset 0 1px 2px rgba(0,0,0,0.12);left:1510px;top:1124px"></div><div style="position:absolute;left:1510px;top:1124px;width:10px;height:20px;border-radius:9px 0 0 9px;background:linear-gradient(#1a6ad8,#0e56bd)"></div><div style="position:absolute;width:198px;height:20px;border-radius:9px;background:#f8f8f8;box-shadow:inset 0 1px 2px rgba(0,0,0,0.12);left:1750px;top:1124px"></div><div style="position:absolute;width:198px;height:20px;border-radius:9px;background:#f8f8f8;box-shadow:inset 0 1px 2px rgba(0,0,0,0.12);left:1990px;top:1124px"></div><svg style="position:absolute;left:2349px;top:1119px" width="28" height="28" viewBox="0 0 28 28">
<g fill="#888"><rect x="2" y="1.5" width="24" height="3.5"/><rect x="12" y="8.5" width="14" height="3"/><rect x="12" y="15.5" width="14" height="3"/><rect x="2" y="22.5" width="24" height="3.5"/>
<polygon points="2,8 9,13.8 2,19.5"/></g></svg><svg style="position:absolute;left:2427px;top:1119px" width="30" height="28" viewBox="0 0 30 28">
<g fill="#888"><rect x="0" y="3" width="3.5" height="21.5"/><rect x="0" y="21" width="28" height="3.5"/>
<rect x="7" y="12" width="3.4" height="6"/><rect x="12.4" y="5" width="3.4" height="13"/><rect x="17.8" y="8" width="3.4" height="10"/><rect x="23.2" y="3" width="3.4" height="15"/></g></svg><svg style="position:absolute;left:2503px;top:1119px" width="30" height="28" viewBox="0 0 30 28">
<g fill="#888"><rect x="1" y="2" width="5" height="5" rx="0.8"/><rect x="1" y="11.3" width="5" height="5" rx="0.8"/><rect x="1" y="19.8" width="5" height="5" rx="0.8"/>
<rect x="10.4" y="3.2" width="18.6" height="3.3"/><rect x="10.4" y="12" width="18.6" height="3.3"/><rect x="10.4" y="20.8" width="18.6" height="3.3"/></g></svg><div style="position:absolute;left:448px;top:1166px;width:2104px;height:66px;background:#f9f9f9"></div><div style="position:absolute;left:448px;top:1230px;width:2104px;height:2px;background:#ebebeb"></div><svg style="position:absolute;left:1056px;top:1185px" width="28" height="28" viewBox="0 0 28 28">
<polyline points="11.5,5.8 2.2,5.8 2.2,25.8 22.4,25.8 22.4,15.5" fill="none" stroke="#888" stroke-width="4" stroke-linejoin="round" stroke-linecap="round"/>
<line x1="8.8" y1="19.3" x2="24.5" y2="3.6" stroke="#888" stroke-width="4" stroke-linecap="round"/>
<polyline points="14.5,2.3 26,2.3 26,13.5" fill="none" stroke="#888" stroke-width="4" stroke-linejoin="round" stroke-linecap="round"/></svg><svg style="position:absolute;left:1099px;top:1185px" width="25" height="29" viewBox="0 0 25 29">
<path d="M5.8 13 L5.8 8.5 Q5.8 1.3 12.2 1.3 Q18.6 1.3 18.6 8.5 L18.6 13" fill="none" stroke="#13833e" stroke-width="4.4"/>
<rect x="0.2" y="12.8" width="24.2" height="15.3" rx="2.5" fill="#13833e"/></svg><div style="position:absolute;width:198px;height:20px;border-radius:9px;background:#f8f8f8;box-shadow:inset 0 1px 2px rgba(0,0,0,0.12);left:1510px;top:1190px"></div><div style="position:absolute;left:1510px;top:1190px;width:10px;height:20px;border-radius:9px 0 0 9px;background:linear-gradient(#1a6ad8,#0e56bd)"></div><div style="position:absolute;width:198px;height:20px;border-radius:9px;background:#f8f8f8;box-shadow:inset 0 1px 2px rgba(0,0,0,0.12);left:1750px;top:1190px"></div><div style="position:absolute;left:1750px;top:1190px;width:40px;height:20px;border-radius:9px 0 0 9px;background:linear-gradient(#c90020,#a8001a)"></div><div style="position:absolute;width:198px;height:20px;border-radius:9px;background:#f8f8f8;box-shadow:inset 0 1px 2px rgba(0,0,0,0.12);left:1990px;top:1190px"></div><svg style="position:absolute;left:1990px;top:1190px" width="198" height="20"><polygon points="0.0,9.0 198.0,9.0 198,20 0,20" fill="#6ab004"/></svg><svg style="position:absolute;left:2349px;top:1185px" width="28" height="28" viewBox="0 0 28 28">
<g fill="#888"><rect x="2" y="1.5" width="24" height="3.5"/><rect x="12" y="8.5" width="14" height="3"/><rect x="12" y="15.5" width="14" height="3"/><rect x="2" y="22.5" width="24" height="3.5"/>
<polygon points="2,8 9,13.8 2,19.5"/></g></svg><svg style="position:absolute;left:2427px;top:1185px" width="30" height="28" viewBox="0 0 30 28">
<g fill="#888"><rect x="0" y="3" width="3.5" height="21.5"/><rect x="0" y="21" width="28" height="3.5"/>
<rect x="7" y="12" width="3.4" height="6"/><rect x="12.4" y="5" width="3.4" height="13"/><rect x="17.8" y="8" width="3.4" height="10"/><rect x="23.2" y="3" width="3.4" height="15"/></g></svg><svg style="position:absolute;left:2503px;top:1185px" width="30" height="28" viewBox="0 0 30 28">
<g fill="#888"><rect x="1" y="2" width="5" height="5" rx="0.8"/><rect x="1" y="11.3" width="5" height="5" rx="0.8"/><rect x="1" y="19.8" width="5" height="5" rx="0.8"/>
<rect x="10.4" y="3.2" width="18.6" height="3.3"/><rect x="10.4" y="12" width="18.6" height="3.3"/><rect x="10.4" y="20.8" width="18.6" height="3.3"/></g></svg><div style="position:absolute;left:448px;top:1232px;width:2104px;height:66px;background:#ffffff"></div><div style="position:absolute;left:448px;top:1296px;width:2104px;height:2px;background:#ebebeb"></div><svg style="position:absolute;left:1056px;top:1251px" width="28" height="28" viewBox="0 0 28 28">
<polyline points="11.5,5.8 2.2,5.8 2.2,25.8 22.4,25.8 22.4,15.5" fill="none" stroke="#888" stroke-width="4" stroke-linejoin="round" stroke-linecap="round"/>
<line x1="8.8" y1="19.3" x2="24.5" y2="3.6" stroke="#888" stroke-width="4" stroke-linecap="round"/>
<polyline points="14.5,2.3 26,2.3 26,13.5" fill="none" stroke="#888" stroke-width="4" stroke-linejoin="round" stroke-linecap="round"/></svg><svg style="position:absolute;left:1099px;top:1251px" width="25" height="29" viewBox="0 0 25 29">
<path d="M5.8 13 L5.8 8.5 Q5.8 1.3 12.2 1.3 Q18.6 1.3 18.6 8.5 L18.6 13" fill="none" stroke="#13833e" stroke-width="4.4"/>
<rect x="0.2" y="12.8" width="24.2" height="15.3" rx="2.5" fill="#13833e"/></svg><div style="position:absolute;width:198px;height:20px;border-radius:9px;background:#f8f8f8;box-shadow:inset 0 1px 2px rgba(0,0,0,0.12);left:1510px;top:1256px"></div><div style="position:absolute;left:1510px;top:1256px;width:10px;height:20px;border-radius:9px 0 0 9px;background:linear-gradient(#1a6ad8,#0e56bd)"></div><div style="position:absolute;width:198px;height:20px;border-radius:9px;background:#f8f8f8;box-shadow:inset 0 1px 2px rgba(0,0,0,0.12);left:1750px;top:1256px"></div><div style="position:absolute;left:1750px;top:1256px;width:70px;height:20px;border-radius:9px 0 0 9px;background:linear-gradient(#c90020,#a8001a)"></div><div style="position:absolute;width:198px;height:20px;border-radius:9px;background:#f8f8f8;box-shadow:inset 0 1px 2px rgba(0,0,0,0.12);left:1990px;top:1256px"></div><svg style="position:absolute;left:1990px;top:1256px" width="198" height="20"><polygon points="0.0,8.9 17.8,15.4 37.1,8.9 54.9,4.2 72.1,4.2 89.9,15.4 107.7,8.9 179.5,8.9 198.0,15.4 198,20 0,20" fill="#6ab004"/></svg><svg style="position:absolute;left:2349px;top:1251px" width="28" height="28" viewBox="0 0 28 28">
<g fill="#888"><rect x="2" y="1.5" width="24" height="3.5"/><rect x="12" y="8.5" width="14" height="3"/><rect x="12" y="15.5" width="14" height="3"/><rect x="2" y="22.5" width="24" height="3.5"/>
<polygon points="2,8 9,13.8 2,19.5"/></g></svg><svg style="position:absolute;left:2427px;top:1251px" width="30" height="28" viewBox="0 0 30 28">
<g fill="#888"><rect x="0" y="3" width="3.5" height="21.5"/><rect x="0" y="21" width="28" height="3.5"/>
<rect x="7" y="12" width="3.4" height="6"/><rect x="12.4" y="5" width="3.4" height="13"/><rect x="17.8" y="8" width="3.4" height="10"/><rect x="23.2" y="3" width="3.4" height="15"/></g></svg><svg style="position:absolute;left:2503px;top:1251px" width="30" height="28" viewBox="0 0 30 28">
<g fill="#888"><rect x="1" y="2" width="5" height="5" rx="0.8"/><rect x="1" y="11.3" width="5" height="5" rx="0.8"/><rect x="1" y="19.8" width="5" height="5" rx="0.8"/>
<rect x="10.4" y="3.2" width="18.6" height="3.3"/><rect x="10.4" y="12" width="18.6" height="3.3"/><rect x="10.4" y="20.8" width="18.6" height="3.3"/></g></svg><div style="position:absolute;left:448px;top:1298px;width:2104px;height:66px;background:#f9f9f9"></div><div style="position:absolute;left:448px;top:1362px;width:2104px;height:2px;background:#ebebeb"></div><svg style="position:absolute;left:1056px;top:1317px" width="28" height="28" viewBox="0 0 28 28">
<polyline points="11.5,5.8 2.2,5.8 2.2,25.8 22.4,25.8 22.4,15.5" fill="none" stroke="#888" stroke-width="4" stroke-linejoin="round" stroke-linecap="round"/>
<line x1="8.8" y1="19.3" x2="24.5" y2="3.6" stroke="#888" stroke-width="4" stroke-linecap="round"/>
<polyline points="14.5,2.3 26,2.3 26,13.5" fill="none" stroke="#888" stroke-width="4" stroke-linejoin="round" stroke-linecap="round"/></svg><svg style="position:absolute;left:1099px;top:1317px" width="25" height="29" viewBox="0 0 25 29">
<path d="M5.8 13 L5.8 8.5 Q5.8 1.3 12.2 1.3 Q18.6 1.3 18.6 8.5 L18.6 13" fill="none" stroke="#13833e" stroke-width="4.4"/>
<rect x="0.2" y="12.8" width="24.2" height="15.3" rx="2.5" fill="#13833e"/></svg><div style="position:absolute;width:198px;height:20px;border-radius:9px;background:#f8f8f8;box-shadow:inset 0 1px 2px rgba(0,0,0,0.12);left:1510px;top:1322px"></div><div style="position:absolute;left:1510px;top:1322px;width:10px;height:20px;border-radius:9px 0 0 9px;background:linear-gradient(#1a6ad8,#0e56bd)"></div><div style="position:absolute;width:198px;height:20px;border-radius:9px;background:#f8f8f8;box-shadow:inset 0 1px 2px rgba(0,0,0,0.12);left:1750px;top:1322px"></div><div style="position:absolute;left:1750px;top:1322px;width:34px;height:20px;border-radius:9px 0 0 9px;background:linear-gradient(#c90020,#a8001a)"></div><div style="position:absolute;width:198px;height:20px;border-radius:9px;background:#f8f8f8;box-shadow:inset 0 1px 2px rgba(0,0,0,0.12);left:1990px;top:1322px"></div><svg style="position:absolute;left:2349px;top:1317px" width="28" height="28" viewBox="0 0 28 28">
<g fill="#888"><rect x="2" y="1.5" width="24" height="3.5"/><rect x="12" y="8.5" width="14" height="3"/><rect x="12" y="15.5" width="14" height="3"/><rect x="2" y="22.5" width="24" height="3.5"/>
<polygon points="2,8 9,13.8 2,19.5"/></g></svg><svg style="position:absolute;left:2427px;top:1317px" width="30" height="28" viewBox="0 0 30 28">
<g fill="#888"><rect x="0" y="3" width="3.5" height="21.5"/><rect x="0" y="21" width="28" height="3.5"/>
<rect x="7" y="12" width="3.4" height="6"/><rect x="12.4" y="5" width="3.4" height="13"/><rect x="17.8" y="8" width="3.4" height="10"/><rect x="23.2" y="3" width="3.4" height="15"/></g></svg><svg style="position:absolute;left:2503px;top:1317px" width="30" height="28" viewBox="0 0 30 28">
<g fill="#888"><rect x="1" y="2" width="5" height="5" rx="0.8"/><rect x="1" y="11.3" width="5" height="5" rx="0.8"/><rect x="1" y="19.8" width="5" height="5" rx="0.8"/>
<rect x="10.4" y="3.2" width="18.6" height="3.3"/><rect x="10.4" y="12" width="18.6" height="3.3"/><rect x="10.4" y="20.8" width="18.6" height="3.3"/></g></svg><div style="position:absolute;left:448px;top:1364px;width:2104px;height:66px;background:#ffffff"></div><div style="position:absolute;left:448px;top:1428px;width:2104px;height:2px;background:#ebebeb"></div><svg style="position:absolute;left:1056px;top:1383px" width="28" height="28" viewBox="0 0 28 28">
<polyline points="11.5,5.8 2.2,5.8 2.2,25.8 22.4,25.8 22.4,15.5" fill="none" stroke="#888" stroke-width="4" stroke-linejoin="round" stroke-linecap="round"/>
<line x1="8.8" y1="19.3" x2="24.5" y2="3.6" stroke="#888" stroke-width="4" stroke-linecap="round"/>
<polyline points="14.5,2.3 26,2.3 26,13.5" fill="none" stroke="#888" stroke-width="4" stroke-linejoin="round" stroke-linecap="round"/></svg><svg style="position:absolute;left:1099px;top:1383px" width="25" height="29" viewBox="0 0 25 29">
<path d="M5.8 13 L5.8 8.5 Q5.8 1.3 12.2 1.3 Q18.6 1.3 18.6 8.5 L18.6 13" fill="none" stroke="#13833e" stroke-width="4.4"/>
<rect x="0.2" y="12.8" width="24.2" height="15.3" rx="2.5" fill="#13833e"/></svg><div style="position:absolute;width:198px;height:20px;border-radius:9px;background:#f8f8f8;box-shadow:inset 0 1px 2px rgba(0,0,0,0.12);left:1510px;top:1388px"></div><div style="position:absolute;left:1510px;top:1388px;width:10px;height:20px;border-radius:9px 0 0 9px;background:linear-gradient(#1a6ad8,#0e56bd)"></div><div style="position:absolute;width:198px;height:20px;border-radius:9px;background:#f8f8f8;box-shadow:inset 0 1px 2px rgba(0,0,0,0.12);left:1750px;top:1388px"></div><div style="position:absolute;width:198px;height:20px;border-radius:9px;background:#f8f8f8;box-shadow:inset 0 1px 2px rgba(0,0,0,0.12);left:1990px;top:1388px"></div><svg style="position:absolute;left:2349px;top:1383px" width="28" height="28" viewBox="0 0 28 28">
<g fill="#888"><rect x="2" y="1.5" width="24" height="3.5"/><rect x="12" y="8.5" width="14" height="3"/><rect x="12" y="15.5" width="14" height="3"/><rect x="2" y="22.5" width="24" height="3.5"/>
<polygon points="2,8 9,13.8 2,19.5"/></g></svg><svg style="position:absolute;left:2427px;top:1383px" width="30" height="28" viewBox="0 0 30 28">
<g fill="#888"><rect x="0" y="3" width="3.5" height="21.5"/><rect x="0" y="21" width="28" height="3.5"/>
<rect x="7" y="12" width="3.4" height="6"/><rect x="12.4" y="5" width="3.4" height="13"/><rect x="17.8" y="8" width="3.4" height="10"/><rect x="23.2" y="3" width="3.4" height="15"/></g></svg><svg style="position:absolute;left:2503px;top:1383px" width="30" height="28" viewBox="0 0 30 28">
<g fill="#888"><rect x="1" y="2" width="5" height="5" rx="0.8"/><rect x="1" y="11.3" width="5" height="5" rx="0.8"/><rect x="1" y="19.8" width="5" height="5" rx="0.8"/>
<rect x="10.4" y="3.2" width="18.6" height="3.3"/><rect x="10.4" y="12" width="18.6" height="3.3"/><rect x="10.4" y="20.8" width="18.6" height="3.3"/></g></svg><div style="position:absolute;left:448px;top:1430px;width:2104px;height:66px;background:#f9f9f9"></div><div style="position:absolute;left:448px;top:1494px;width:2104px;height:2px;background:#ebebeb"></div><svg style="position:absolute;left:1056px;top:1449px" width="28" height="28" viewBox="0 0 28 28">
<polyline points="11.5,5.8 2.2,5.8 2.2,25.8 22.4,25.8 22.4,15.5" fill="none" stroke="#888" stroke-width="4" stroke-linejoin="round" stroke-linecap="round"/>
<line x1="8.8" y1="19.3" x2="24.5" y2="3.6" stroke="#888" stroke-width="4" stroke-linecap="round"/>
<polyline points="14.5,2.3 26,2.3 26,13.5" fill="none" stroke="#888" stroke-width="4" stroke-linejoin="round" stroke-linecap="round"/></svg><svg style="position:absolute;left:1099px;top:1449px" width="25" height="29" viewBox="0 0 25 29">
<path d="M5.8 13 L5.8 8.5 Q5.8 1.3 12.2 1.3 Q18.6 1.3 18.6 8.5 L18.6 13" fill="none" stroke="#13833e" stroke-width="4.4"/>
<rect x="0.2" y="12.8" width="24.2" height="15.3" rx="2.5" fill="#13833e"/></svg><div style="position:absolute;width:198px;height:20px;border-radius:9px;background:#f8f8f8;box-shadow:inset 0 1px 2px rgba(0,0,0,0.12);left:1510px;top:1454px"></div><div style="position:absolute;left:1510px;top:1454px;width:10px;height:20px;border-radius:9px 0 0 9px;background:linear-gradient(#1a6ad8,#0e56bd)"></div><div style="position:absolute;width:198px;height:20px;border-radius:9px;background:#f8f8f8;box-shadow:inset 0 1px 2px rgba(0,0,0,0.12);left:1750px;top:1454px"></div><div style="position:absolute;left:1750px;top:1454px;width:36px;height:20px;border-radius:9px 0 0 9px;background:linear-gradient(#c90020,#a8001a)"></div><div style="position:absolute;width:198px;height:20px;border-radius:9px;background:#f8f8f8;box-shadow:inset 0 1px 2px rgba(0,0,0,0.12);left:1990px;top:1454px"></div><svg style="position:absolute;left:2349px;top:1449px" width="28" height="28" viewBox="0 0 28 28">
<g fill="#888"><rect x="2" y="1.5" width="24" height="3.5"/><rect x="12" y="8.5" width="14" height="3"/><rect x="12" y="15.5" width="14" height="3"/><rect x="2" y="22.5" width="24" height="3.5"/>
<polygon points="2,8 9,13.8 2,19.5"/></g></svg><svg style="position:absolute;left:2427px;top:1449px" width="30" height="28" viewBox="0 0 30 28">
<g fill="#888"><rect x="0" y="3" width="3.5" height="21.5"/><rect x="0" y="21" width="28" height="3.5"/>
<rect x="7" y="12" width="3.4" height="6"/><rect x="12.4" y="5" width="3.4" height="13"/><rect x="17.8" y="8" width="3.4" height="10"/><rect x="23.2" y="3" width="3.4" height="15"/></g></svg><svg style="position:absolute;left:2503px;top:1449px" width="30" height="28" viewBox="0 0 30 28">
<g fill="#888"><rect x="1" y="2" width="5" height="5" rx="0.8"/><rect x="1" y="11.3" width="5" height="5" rx="0.8"/><rect x="1" y="19.8" width="5" height="5" rx="0.8"/>
<rect x="10.4" y="3.2" width="18.6" height="3.3"/><rect x="10.4" y="12" width="18.6" height="3.3"/><rect x="10.4" y="20.8" width="18.6" height="3.3"/></g></svg><div style="position:absolute;left:448px;top:1496px;width:2104px;height:66px;background:#ffffff"></div><div style="position:absolute;left:448px;top:1560px;width:2104px;height:2px;background:#ebebeb"></div><svg style="position:absolute;left:1056px;top:1515px" width="28" height="28" viewBox="0 0 28 28">
<polyline points="11.5,5.8 2.2,5.8 2.2,25.8 22.4,25.8 22.4,15.5" fill="none" stroke="#888" stroke-width="4" stroke-linejoin="round" stroke-linecap="round"/>
<line x1="8.8" y1="19.3" x2="24.5" y2="3.6" stroke="#888" stroke-width="4" stroke-linecap="round"/>
<polyline points="14.5,2.3 26,2.3 26,13.5" fill="none" stroke="#888" stroke-width="4" stroke-linejoin="round" stroke-linecap="round"/></svg><svg style="position:absolute;left:1099px;top:1515px" width="25" height="29" viewBox="0 0 25 29">
<path d="M5.8 13 L5.8 8.5 Q5.8 1.3 12.2 1.3 Q18.6 1.3 18.6 8.5 L18.6 13" fill="none" stroke="#13833e" stroke-width="4.4"/>
<rect x="0.2" y="12.8" width="24.2" height="15.3" rx="2.5" fill="#13833e"/></svg><div style="position:absolute;width:198px;height:20px;border-radius:9px;background:#f8f8f8;box-shadow:inset 0 1px 2px rgba(0,0,0,0.12);left:1510px;top:1520px"></div><div style="position:absolute;left:1510px;top:1520px;width:40px;height:20px;border-radius:9px 0 0 9px;background:linear-gradient(#1a6ad8,#0e56bd)"></div><div style="position:absolute;width:198px;height:20px;border-radius:9px;background:#f8f8f8;box-shadow:inset 0 1px 2px rgba(0,0,0,0.12);left:1750px;top:1520px"></div><div style="position:absolute;left:1750px;top:1520px;width:100px;height:20px;border-radius:9px 0 0 9px;background:linear-gradient(#c90020,#a8001a)"></div><div style="position:absolute;width:198px;height:20px;border-radius:9px;background:#f8f8f8;box-shadow:inset 0 1px 2px rgba(0,0,0,0.12);left:1990px;top:1520px"></div><svg style="position:absolute;left:1990px;top:1520px" width="198" height="20"><polygon points="0.0,6.9 18.5,0.0 36.9,0.0 53.0,11.5 71.5,16.2 108.4,16.2 126.8,13.4 163.7,13.4 179.9,11.1 198.0,16.2 198,20 0,20" fill="#6ab004"/></svg><svg style="position:absolute;left:2349px;top:1515px" width="28" height="28" viewBox="0 0 28 28">
<g fill="#888"><rect x="2" y="1.5" width="24" height="3.5"/><rect x="12" y="8.5" width="14" height="3"/><rect x="12" y="15.5" width="14" height="3"/><rect x="2" y="22.5" width="24" height="3.5"/>
<polygon points="2,8 9,13.8 2,19.5"/></g></svg><svg style="position:absolute;left:2427px;top:1515px" width="30" height="28" viewBox="0 0 30 28">
<g fill="#888"><rect x="0" y="3" width="3.5" height="21.5"/><rect x="0" y="21" width="28" height="3.5"/>
<rect x="7" y="12" width="3.4" height="6"/><rect x="12.4" y="5" width="3.4" height="13"/><rect x="17.8" y="8" width="3.4" height="10"/><rect x="23.2" y="3" width="3.4" height="15"/></g></svg><svg style="position:absolute;left:2503px;top:1515px" width="30" height="28" viewBox="0 0 30 28">
<g fill="#888"><rect x="1" y="2" width="5" height="5" rx="0.8"/><rect x="1" y="11.3" width="5" height="5" rx="0.8"/><rect x="1" y="19.8" width="5" height="5" rx="0.8"/>
<rect x="10.4" y="3.2" width="18.6" height="3.3"/><rect x="10.4" y="12" width="18.6" height="3.3"/><rect x="10.4" y="20.8" width="18.6" height="3.3"/></g></svg><div style="position:absolute;left:448px;top:1562px;width:2104px;height:66px;background:#f9f9f9"></div><div style="position:absolute;left:448px;top:1626px;width:2104px;height:2px;background:#ebebeb"></div><svg style="position:absolute;left:1056px;top:1581px" width="28" height="28" viewBox="0 0 28 28">
<polyline points="11.5,5.8 2.2,5.8 2.2,25.8 22.4,25.8 22.4,15.5" fill="none" stroke="#888" stroke-width="4" stroke-linejoin="round" stroke-linecap="round"/>
<line x1="8.8" y1="19.3" x2="24.5" y2="3.6" stroke="#888" stroke-width="4" stroke-linecap="round"/>
<polyline points="14.5,2.3 26,2.3 26,13.5" fill="none" stroke="#888" stroke-width="4" stroke-linejoin="round" stroke-linecap="round"/></svg><svg style="position:absolute;left:1099px;top:1581px" width="25" height="29" viewBox="0 0 25 29">
<path d="M5.8 13 L5.8 8.5 Q5.8 1.3 12.2 1.3 Q18.6 1.3 18.6 8.5 L18.6 13" fill="none" stroke="#13833e" stroke-width="4.4"/>
<rect x="0.2" y="12.8" width="24.2" height="15.3" rx="2.5" fill="#13833e"/></svg><div style="position:absolute;width:198px;height:20px;border-radius:9px;background:#f8f8f8;box-shadow:inset 0 1px 2px rgba(0,0,0,0.12);left:1510px;top:1586px"></div><div style="position:absolute;left:1510px;top:1586px;width:10px;height:20px;border-radius:9px 0 0 9px;background:linear-gradient(#1a6ad8,#0e56bd)"></div><div style="position:absolute;width:198px;height:20px;border-radius:9px;background:#f8f8f8;box-shadow:inset 0 1px 2px rgba(0,0,0,0.12);left:1750px;top:1586px"></div><div style="position:absolute;left:1750px;top:1586px;width:34px;height:20px;border-radius:9px 0 0 9px;background:linear-gradient(#c90020,#a8001a)"></div><div style="position:absolute;width:198px;height:20px;border-radius:9px;background:#f8f8f8;box-shadow:inset 0 1px 2px rgba(0,0,0,0.12);left:1990px;top:1586px"></div><svg style="position:absolute;left:2349px;top:1581px" width="28" height="28" viewBox="0 0 28 28">
<g fill="#888"><rect x="2" y="1.5" width="24" height="3.5"/><rect x="12" y="8.5" width="14" height="3"/><rect x="12" y="15.5" width="14" height="3"/><rect x="2" y="22.5" width="24" height="3.5"/>
<polygon points="2,8 9,13.8 2,19.5"/></g></svg><svg style="position:absolute;left:2427px;top:1581px" width="30" height="28" viewBox="0 0 30 28">
<g fill="#888"><rect x="0" y="3" width="3.5" height="21.5"/><rect x="0" y="21" width="28" height="3.5"/>
<rect x="7" y="12" width="3.4" height="6"/><rect x="12.4" y="5" width="3.4" height="13"/><rect x="17.8" y="8" width="3.4" height="10"/><rect x="23.2" y="3" width="3.4" height="15"/></g></svg><svg style="position:absolute;left:2503px;top:1581px" width="30" height="28" viewBox="0 0 30 28">
<g fill="#888"><rect x="1" y="2" width="5" height="5" rx="0.8"/><rect x="1" y="11.3" width="5" height="5" rx="0.8"/><rect x="1" y="19.8" width="5" height="5" rx="0.8"/>
<rect x="10.4" y="3.2" width="18.6" height="3.3"/><rect x="10.4" y="12" width="18.6" height="3.3"/><rect x="10.4" y="20.8" width="18.6" height="3.3"/></g></svg><div style="position:absolute;left:888px;top:700px;width:2px;height:920px;background:#e9e9e9"></div><div style="position:absolute;left:1028px;top:700px;width:2px;height:920px;background:#e9e9e9"></div><div style="position:absolute;left:1488px;top:700px;width:2px;height:920px;background:#e9e9e9"></div><div style="position:absolute;left:1728px;top:700px;width:2px;height:920px;background:#e9e9e9"></div><div style="position:absolute;left:1968px;top:700px;width:2px;height:920px;background:#e9e9e9"></div><div style="position:absolute;left:2208px;top:700px;width:2px;height:920px;background:#e9e9e9"></div><div style="position:absolute;left:2326px;top:700px;width:2px;height:920px;background:#e9e9e9"></div><div style="position:absolute;left:2404px;top:770px;width:2px;height:850px;background:#e9e9e9"></div><div style="position:absolute;left:2482px;top:770px;width:2px;height:850px;background:#e9e9e9"></div><div style="position:absolute;left:2468px;top:1478px;width:92px;height:92px;border-radius:50%;background:#fff;box-shadow:0 2px 6px rgba(0,0,0,0.22)"></div>
<svg style="position:absolute;left:2490px;top:1496px" width="48" height="56" viewBox="0 0 48 56">
<path d="M13.6 16.9 Q17.5 9.65 25 9.65 Q35.9 9.65 35.9 18 Q35.9 23.5 29 27 Q23.8 29.8 23.8 34.7" fill="none" stroke="#1565d3" stroke-width="8.7" stroke-linejoin="round"/>
<circle cx="24" cy="43.5" r="6" fill="#1565d3"/></svg><div class="t" style="left:46.00px;top:36.33px;font-size:53px;font-weight:400;color:#fff;-webkit-text-stroke:1.7px #fff;transform:scaleX(0.95);transform-origin:left top;letter-spacing:2.9px;">SISTRIX</div><div class="t" style="left:411.00px;top:44.63px;font-size:33px;font-weight:700;color:#a9cdfb;letter-spacing:-0.266px;transform:scaleX(0.9478);transform-origin:left top;text-shadow:0 2px 3px rgba(0,0,40,0.25);">Start</div><div class="t" style="left:530.00px;top:44.63px;font-size:33px;font-weight:700;color:#ffffff;letter-spacing:-0.491px;transform:scaleX(0.9380);transform-origin:left top;text-shadow:0 2px 3px rgba(0,0,40,0.25);">SEO</div><div class="t" style="left:643.00px;top:44.63px;font-size:33px;font-weight:700;color:#a9cdfb;letter-spacing:-0.535px;transform:scaleX(0.9098);transform-origin:left top;text-shadow:0 2px 3px rgba(0,0,40,0.25);">Links</div><div class="t" style="left:768.00px;top:44.63px;font-size:33px;font-weight:700;color:#a9cdfb;letter-spacing:-0.233px;transform:scaleX(0.9593);transform-origin:left top;text-shadow:0 2px 3px rgba(0,0,40,0.25);">Optimizer</div><div class="t" style="left:961.00px;top:44.63px;font-size:33px;font-weight:700;color:#a9cdfb;letter-spacing:-0.180px;transform:scaleX(0.9728);transform-origin:left top;text-shadow:0 2px 3px rgba(0,0,40,0.25);">Mehr</div><div class="t" style="left:2299.00px;top:43.04px;font-size:32px;font-weight:700;color:#b2d4fd;letter-spacing:-0.235px;transform:scaleX(0.9627);transform-origin:left top;text-shadow:0 2px 3px rgba(0,0,40,0.25);">Johannes</div><div class="t" style="left:189.00px;top:176.13px;font-size:33px;font-weight:400;color:#505050;letter-spacing:-0.038px;">https://kitchengirls.de/rezepte/avocado-toast</div><div class="t" style="left:49.00px;top:296.15px;font-size:29px;font-weight:400;color:#888;letter-spacing:-0.069px;">https://kitchengirls.de/rezept</div><div class="t" style="left:459.50px;top:296.15px;font-size:29px;font-weight:400;color:#888;letter-spacing:-1.041px;">Keywords</div><div class="t" style="left:631.00px;top:296.15px;font-size:29px;font-weight:700;color:#111;letter-spacing:-0.579px;transform:scaleX(0.9031);transform-origin:left top;">Keywords</div><div class="t" style="left:1845.00px;top:295.66px;font-size:28px;font-weight:400;color:#666;letter-spacing:-0.394px;text-shadow:0 1px 0 #fff;">Datum</div><div class="t" style="left:1979.00px;top:295.66px;font-size:28px;font-weight:400;color:#666;letter-spacing:-0.393px;text-shadow:0 1px 0 #fff;">Optionen</div><div class="t" style="left:2241.00px;top:295.66px;font-size:28px;font-weight:400;color:#666;letter-spacing:-0.323px;text-shadow:0 1px 0 #fff;">Export</div><div class="t" style="left:73.00px;top:399.34px;font-size:32px;font-weight:700;color:#0b2a65;letter-spacing:-0.569px;transform:scaleX(0.9261);transform-origin:left top;">SEO</div><div class="t" style="left:73.00px;top:589.74px;font-size:32px;font-weight:700;color:#0b2a65;letter-spacing:-0.351px;transform:scaleX(0.9459);transform-origin:left top;">Keywords</div><div class="t" style="left:73.00px;top:1080.04px;font-size:32px;font-weight:700;color:#0b2a65;letter-spacing:-0.735px;transform:scaleX(0.8986);transform-origin:left top;">SERPs</div><div class="t" style="left:73.00px;top:1469.04px;font-size:32px;font-weight:700;color:#0b2a65;letter-spacing:-0.501px;transform:scaleX(0.9128);transform-origin:left top;">Links</div><div class="t" style="left:74.50px;top:466.66px;font-size:28px;font-weight:400;color:#151515;letter-spacing:-0.189px;">Überblick</div><div class="t" style="left:74.50px;top:526.66px;font-size:28px;font-weight:400;color:#151515;letter-spacing:0.015px;">Sichtbarkeitsindex</div><div class="t" style="left:74.50px;top:656.66px;font-size:28px;font-weight:400;color:#151515;letter-spacing:-0.189px;">Überblick</div><div class="t" style="left:74.50px;top:776.26px;font-size:28px;font-weight:400;color:#151515;">Keyword-Ideen</div><div class="t" style="left:74.50px;top:836.66px;font-size:28px;font-weight:400;color:#151515;">Keyword-Gruppen</div><div class="t" style="left:74.50px;top:896.66px;font-size:28px;font-weight:400;color:#151515;letter-spacing:-0.408px;">Ranking-Veränderungen</div><div class="t" style="left:74.50px;top:957.16px;font-size:28px;font-weight:400;color:#151515;">Ranking-Verteilung</div><div class="t" style="left:74.50px;top:1016.66px;font-size:28px;font-weight:400;color:#151515;">Chancen</div><div class="t" style="left:74.50px;top:1146.66px;font-size:28px;font-weight:400;color:#151515;">Wettbewerber</div><div class="t" style="left:74.50px;top:1206.36px;font-size:28px;font-weight:400;color:#151515;">Suchintention</div><div class="t" style="left:74.50px;top:1266.66px;font-size:28px;font-weight:400;color:#151515;">SERP-Snippets</div><div class="t" style="left:74.50px;top:1326.66px;font-size:28px;font-weight:400;color:#151515;">Featured Snippets</div><div class="t" style="left:74.50px;top:1386.66px;font-size:28px;font-weight:400;color:#151515;">Universal-Search</div><div class="t" style="left:74.50px;top:1536.26px;font-size:28px;font-weight:400;color:#151515;letter-spacing:-0.189px;">Überblick</div><div class="t" style="left:74.50px;top:1596.26px;font-size:28px;font-weight:400;color:#151515;">Links</div><div class="t" style="left:74.00px;top:715.66px;font-size:28px;font-weight:700;color:#1a6ad8;letter-spacing:-0.393px;transform:scaleX(0.9312);transform-origin:left top;">Keywords</div><div class="t" style="left:541.00px;top:428.66px;font-size:28px;font-weight:400;color:#fff;letter-spacing:0.278px;text-shadow:0 1px 2px rgba(0,0,0,0.3);">Jetzt filtern</div><div class="t" style="left:821.00px;top:428.66px;font-size:28px;font-weight:400;color:#bbb;letter-spacing:-0.287px;">Keyword suchen</div><div class="t" style="left:1255.00px;top:428.66px;font-size:28px;font-weight:400;color:#666;letter-spacing:0.172px;text-shadow:0 1px 0 #fff;">Position</div><div class="t" style="left:1499.00px;top:428.66px;font-size:28px;font-weight:400;color:#666;letter-spacing:-0.241px;text-shadow:0 1px 0 #fff;">Suchvolumen</div><div class="t" style="left:1810.00px;top:428.66px;font-size:28px;font-weight:400;color:#666;letter-spacing:-0.119px;text-shadow:0 1px 0 #fff;">Wettbewerb</div><div class="t" style="left:2100.00px;top:428.66px;font-size:28px;font-weight:400;color:#666;letter-spacing:-1.006px;text-shadow:0 1px 0 #fff;">SERP-Features</div><div class="t" style="left:551.00px;top:520.66px;font-size:28px;font-weight:400;color:#666;letter-spacing:0.021px;text-shadow:0 1px 0 #fff;">Treffer-Merkmale</div><div class="t" style="left:907.00px;top:520.66px;font-size:28px;font-weight:400;color:#666;letter-spacing:-0.102px;text-shadow:0 1px 0 #fff;">Suchintention: Know Simple</div><div class="t" style="left:1396.00px;top:520.66px;font-size:28px;font-weight:400;color:#666;text-shadow:0 1px 0 #fff;">Keyword Kannibalismus anzeigen</div><div class="t" style="left:529.00px;top:644.85px;font-size:30px;font-weight:700;color:#0b2a65;letter-spacing:-0.334px;transform:scaleX(0.9451);transform-origin:left top;">Keywords</div><div class="t" style="left:469.00px;top:718.86px;font-size:28px;font-weight:700;color:#666;letter-spacing:-0.429px;transform:scaleX(0.9258);transform-origin:left top;">Keyword</div><div class="t" style="left:910.00px;top:718.86px;font-size:28px;font-weight:700;color:#666;letter-spacing:-0.217px;transform:scaleX(0.9424);transform-origin:left top;">Positi...</div><div class="t" style="left:1050.00px;top:718.86px;font-size:28px;font-weight:700;color:#666;letter-spacing:-0.571px;transform:scaleX(0.9134);transform-origin:left top;">URL</div><div class="t" style="left:1510.00px;top:718.86px;font-size:28px;font-weight:700;color:#666;letter-spacing:-0.301px;transform:scaleX(0.9402);transform-origin:left top;">Suchvolumen...</div><div class="t" style="left:1750.00px;top:718.86px;font-size:28px;font-weight:700;color:#666;letter-spacing:-0.214px;transform:scaleX(0.9533);transform-origin:left top;">Wettbewerb ...</div><div class="t" style="left:1990.00px;top:718.86px;font-size:28px;font-weight:700;color:#666;letter-spacing:-0.216px;transform:scaleX(0.9580);transform-origin:left top;">Trend</div><div class="t" style="left:2230.00px;top:718.86px;font-size:28px;font-weight:700;color:#666;letter-spacing:-0.340px;transform:scaleX(0.9275);transform-origin:left top;">CPC...</div><div class="t" style="left:469.00px;top:787.06px;font-size:28px;font-weight:400;color:#111;">halbe avocado rezept</div><div class="t" style="right:1594.00px;top:787.06px;font-size:28px;font-weight:400;color:#111;">1</div><div class="t" style="left:1136.00px;top:787.06px;font-size:28px;font-weight:400;color:#111;"><span style="color:#888">kitchengirls.de</span>/rezepte/av...</div><div class="t" style="right:295.00px;top:787.06px;font-size:28px;font-weight:400;color:#111;">-</div><div class="t" style="left:469.00px;top:853.06px;font-size:28px;font-weight:400;color:#111;">halbe avocado rezept</div><div class="t" style="right:1594.00px;top:853.06px;font-size:28px;font-weight:400;color:#111;">1</div><div class="t" style="left:1136.00px;top:853.06px;font-size:28px;font-weight:400;color:#111;"><span style="color:#888">kitchengirls.de</span>/rezepte/av...</div><div class="t" style="right:295.00px;top:853.06px;font-size:28px;font-weight:400;color:#111;">-</div><div class="t" style="left:469.00px;top:919.06px;font-size:28px;font-weight:400;color:#111;">avocado toast gesund</div><div class="t" style="right:1594.00px;top:919.06px;font-size:28px;font-weight:400;color:#111;">2</div><div class="t" style="left:1136.00px;top:919.06px;font-size:28px;font-weight:400;color:#111;"><span style="color:#888">kitchengirls.de</span>/rezepte/av...</div><div class="t" style="right:295.00px;top:919.06px;font-size:28px;font-weight:400;color:#111;">-</div><div class="t" style="left:469.00px;top:985.06px;font-size:28px;font-weight:400;color:#111;">avocado toast</div><div class="t" style="right:1594.00px;top:985.06px;font-size:28px;font-weight:400;color:#111;">3</div><div class="t" style="left:1136.00px;top:985.06px;font-size:28px;font-weight:400;color:#111;"><span style="color:#888">kitchengirls.de</span>/rezepte/av...</div><div class="t" style="right:295.00px;top:985.06px;font-size:28px;font-weight:400;color:#111;letter-spacing:-0.760px;">0,70 €</div><div class="t" style="left:469.00px;top:1051.06px;font-size:28px;font-weight:400;color:#111;">avocado toast rezept</div><div class="t" style="right:1594.00px;top:1051.06px;font-size:28px;font-weight:400;color:#111;">3</div><div class="t" style="left:1136.00px;top:1051.06px;font-size:28px;font-weight:400;color:#111;"><span style="color:#888">kitchengirls.de</span>/rezepte/av...</div><div class="t" style="right:295.00px;top:1051.06px;font-size:28px;font-weight:400;color:#111;letter-spacing:-0.760px;">0,60 €</div><div class="t" style="left:469.00px;top:1117.06px;font-size:28px;font-weight:400;color:#111;">avocado womit kombinieren</div><div class="t" style="right:1594.00px;top:1117.06px;font-size:28px;font-weight:400;color:#111;">3</div><div class="t" style="left:1136.00px;top:1117.06px;font-size:28px;font-weight:400;color:#111;"><span style="color:#888">kitchengirls.de</span>/rezepte/av...</div><div class="t" style="right:295.00px;top:1117.06px;font-size:28px;font-weight:400;color:#111;">-</div><div class="t" style="left:469.00px;top:1183.06px;font-size:28px;font-weight:400;color:#111;">halbe avocado rezept</div><div class="t" style="right:1594.00px;top:1183.06px;font-size:28px;font-weight:400;color:#111;">3</div><div class="t" style="left:1136.00px;top:1183.06px;font-size:28px;font-weight:400;color:#111;"><span style="color:#888">kitchengirls.de</span>/rezepte/av...</div><div class="t" style="right:295.00px;top:1183.06px;font-size:28px;font-weight:400;color:#111;">-</div><div class="t" style="left:469.00px;top:1249.06px;font-size:28px;font-weight:400;color:#111;">avocado toast gesund</div><div class="t" style="right:1594.00px;top:1249.06px;font-size:28px;font-weight:400;color:#111;">6</div><div class="t" style="left:1136.00px;top:1249.06px;font-size:28px;font-weight:400;color:#111;"><span style="color:#888">kitchengirls.de</span>/rezepte/av...</div><div class="t" style="right:295.00px;top:1249.06px;font-size:28px;font-weight:400;color:#111;">-</div><div class="t" style="left:469.00px;top:1315.06px;font-size:28px;font-weight:400;color:#111;">avocado toast vegan</div><div class="t" style="right:1594.00px;top:1315.06px;font-size:28px;font-weight:400;color:#111;">6</div><div class="t" style="left:1136.00px;top:1315.06px;font-size:28px;font-weight:400;color:#111;"><span style="color:#888">kitchengirls.de</span>/rezepte/av...</div><div class="t" style="right:295.00px;top:1315.06px;font-size:28px;font-weight:400;color:#111;">-</div><div class="t" style="left:469.00px;top:1381.06px;font-size:28px;font-weight:400;color:#111;">avocado womit kombinieren</div><div class="t" style="right:1594.00px;top:1381.06px;font-size:28px;font-weight:400;color:#111;">7</div><div class="t" style="left:1136.00px;top:1381.06px;font-size:28px;font-weight:400;color:#111;"><span style="color:#888">kitchengirls.de</span>/rezepte/av...</div><div class="t" style="right:295.00px;top:1381.06px;font-size:28px;font-weight:400;color:#111;">-</div><div class="t" style="left:469.00px;top:1447.06px;font-size:28px;font-weight:400;color:#111;">gesunder toast</div><div class="t" style="right:1594.00px;top:1447.06px;font-size:28px;font-weight:400;color:#111;">10</div><div class="t" style="left:1136.00px;top:1447.06px;font-size:28px;font-weight:400;color:#111;"><span style="color:#888">kitchengirls.de</span>/rezepte/av...</div><div class="t" style="right:295.00px;top:1447.06px;font-size:28px;font-weight:400;color:#111;">-</div><div class="t" style="left:469.00px;top:1513.06px;font-size:28px;font-weight:400;color:#111;">wie isst man avocado auf brot</div><div class="t" style="right:1594.00px;top:1513.06px;font-size:28px;font-weight:400;color:#111;">12</div><div class="t" style="left:1136.00px;top:1513.06px;font-size:28px;font-weight:400;color:#111;"><span style="color:#888">kitchengirls.de</span>/rezepte/av...</div><div class="t" style="right:295.00px;top:1513.06px;font-size:28px;font-weight:400;color:#111;letter-spacing:-0.760px;">0,80 €</div><div class="t" style="left:469.00px;top:1579.06px;font-size:28px;font-weight:400;color:#111;">avocado toast überbacken</div><div class="t" style="right:1594.00px;top:1579.06px;font-size:28px;font-weight:400;color:#111;">12</div><div class="t" style="left:1136.00px;top:1579.06px;font-size:28px;font-weight:400;color:#111;"><span style="color:#888">kitchengirls.de</span>/rezepte/av...</div><div class="t" style="right:295.00px;top:1579.06px;font-size:28px;font-weight:400;color:#111;">-</div></body></html>
